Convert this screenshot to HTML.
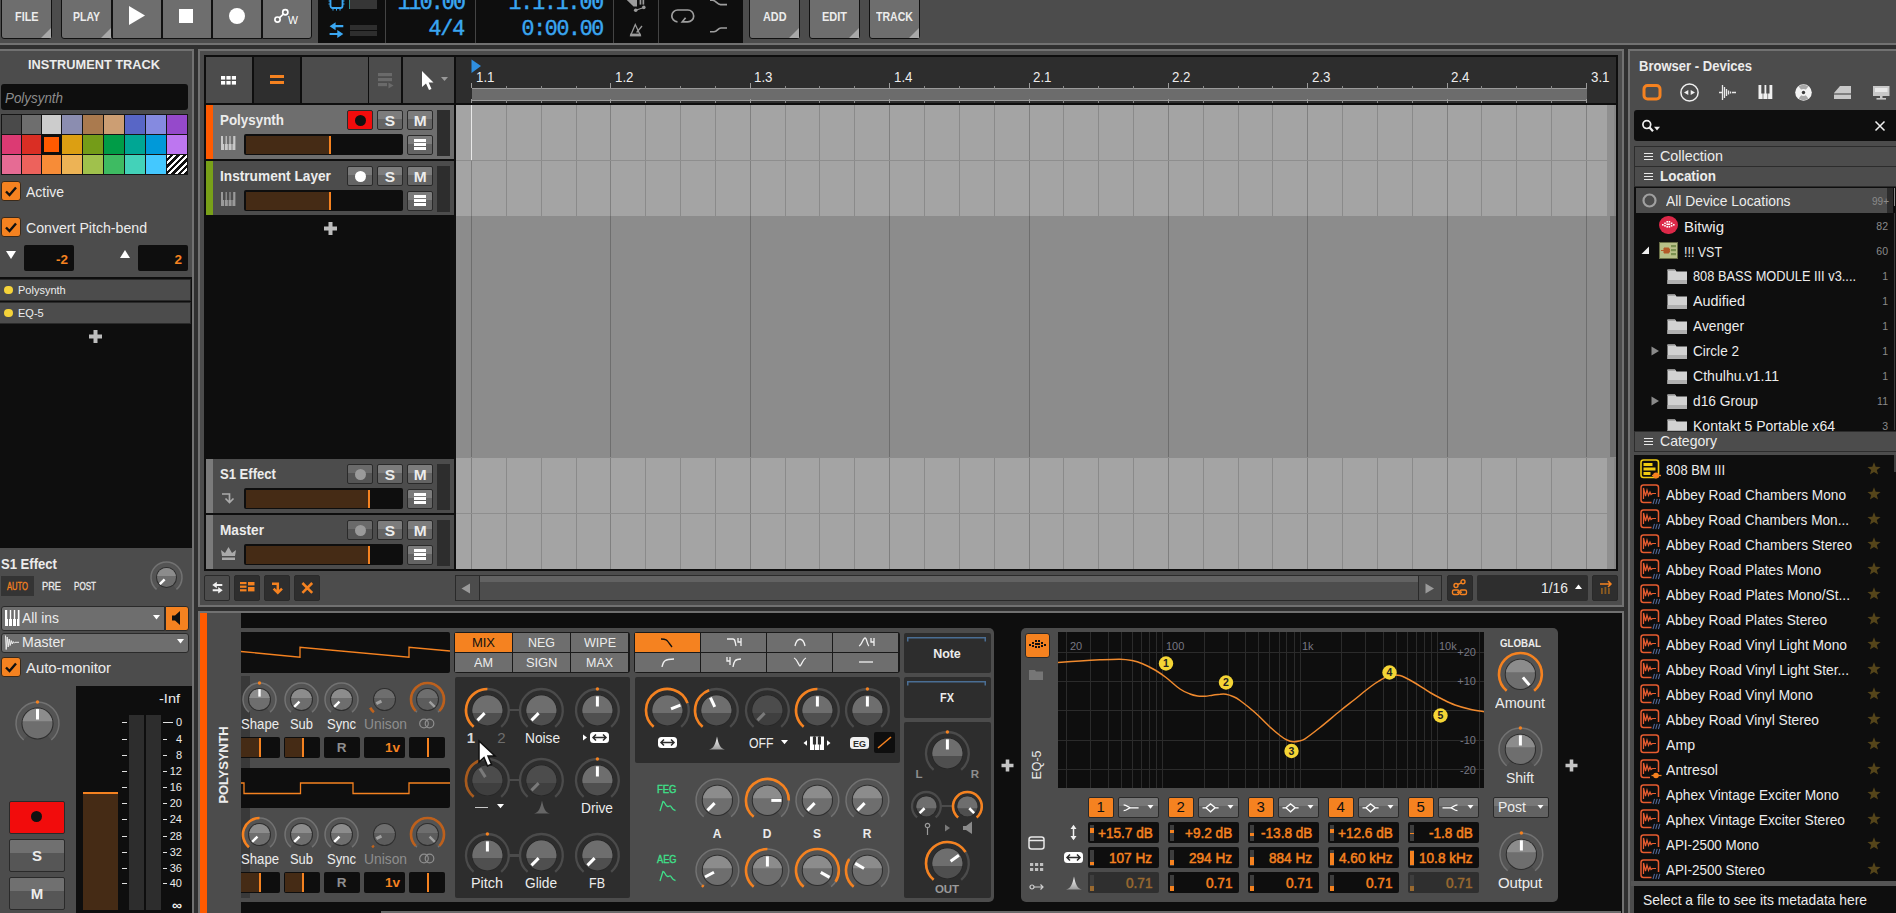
<!DOCTYPE html>
<html><head><meta charset="utf-8"><title>Bitwig Studio</title>
<style>
html,body{margin:0;padding:0;}
body{width:1896px;height:913px;overflow:hidden;background:#2f2f2f;position:relative;font-family:"Liberation Sans",sans-serif;}
#app{position:absolute;left:0;top:0;width:1896px;height:913px;overflow:hidden;}
#app div,#app svg{position:absolute;box-sizing:border-box;}
.t{white-space:nowrap;}
.btn{background:#6e6e6e;border:1px solid #141414;border-radius:3px;}
</style></head><body><div id="app">
<div style="left:0px;top:0px;width:1896px;height:43px;background:#4c4c4c;"></div>
<div style="left:0px;top:43px;width:1896px;height:2px;background:#717171;"></div>
<div style="left:1px;top:-3px;width:51px;height:41.5px;background:#6e6e6e;border:1px solid #111;border-radius:3px;"></div>
<svg style="left:41px;top:28px;" width="10" height="10" viewBox="0 0 10 10"><path d="M10 0V10H0Z" fill="#a8a8a8"/></svg>
<div class="t" style="left:14.75px;top:10.14px;font-size:12px;line-height:14px;color:#ececec;font-weight:bold;transform:scaleX(0.9039);transform-origin:0 50%;">FILE</div>
<div style="left:61px;top:-3px;width:51px;height:41.5px;background:#6e6e6e;border:1px solid #111;border-radius:3px;"></div>
<svg style="left:101px;top:28px;" width="10" height="10" viewBox="0 0 10 10"><path d="M10 0V10H0Z" fill="#a8a8a8"/></svg>
<div class="t" style="left:73.00px;top:10.14px;font-size:12px;line-height:14px;color:#ececec;font-weight:bold;transform:scaleX(0.8737);transform-origin:0 50%;">PLAY</div>
<div style="left:111.5px;top:-3px;width:50.5px;height:41.5px;background:#6e6e6e;border:1px solid #111;"></div>
<div style="left:161.5px;top:-3px;width:50.5px;height:41.5px;background:#6e6e6e;border:1px solid #111;"></div>
<div style="left:211.5px;top:-3px;width:50.5px;height:41.5px;background:#6e6e6e;border:1px solid #111;"></div>
<div style="left:261.5px;top:-3px;width:50.5px;height:41.5px;background:#6e6e6e;border:1px solid #111;border-radius:0 0 3px 0;"></div>
<svg style="left:126px;top:5px;" width="22" height="22" viewBox="0 0 22 22"><path d="M3 1L19 10.5L3 20Z" fill="#fff"/></svg>
<div style="left:179px;top:9px;width:14px;height:14px;background:#fff;"></div>
<div style="left:228.5px;top:8px;width:16px;height:16px;background:#fff;border-radius:50%;"></div>
<svg style="left:271px;top:4px;" width="32" height="26" viewBox="0 0 32 26"><g fill="none" stroke="#fff" stroke-width="1.7"><circle cx="6.5" cy="15.6" r="2.6"/><circle cx="14.3" cy="8.2" r="2.6"/><path d="M8.4 13.8L12.4 10"/></g></svg>
<div class="t" style="left:288.00px;top:13.62px;font-size:10.5px;line-height:13px;color:#fff;">W</div>
<div style="left:318px;top:0px;width:425px;height:42.5px;background:#0e0e0e;"></div>
<div style="left:385px;top:0px;width:1px;height:42.5px;background:#444;"></div>
<div style="left:475px;top:0px;width:1px;height:42.5px;background:#444;"></div>
<div style="left:613px;top:0px;width:1px;height:42.5px;background:#444;"></div>
<div style="left:658px;top:0px;width:1px;height:42.5px;background:#444;"></div>
<svg style="left:327px;top:0px;" width="22" height="12" viewBox="0 0 22 12"><rect x="3.5" y="-4" width="12" height="12" rx="2" fill="none" stroke="#3aa7f2" stroke-width="1.8"/><path d="M1.5 1h2M1.5 4h2M15.5 1h2M15.5 4h2M6 9v1.6M9.5 9v1.6M13 9v1.6" stroke="#3aa7f2" stroke-width="1"/></svg>
<div style="left:350px;top:0px;width:26.5px;height:9px;background:#363636;"></div>
<div style="left:349px;top:0px;width:1px;height:9px;background:#2e8f8f;"></div>
<svg style="left:329px;top:21px;" width="16" height="18" viewBox="0 0 16 18"><g fill="#3aa7f2"><path d="M0.6 5.2L6.6 1.2V4.1H14.3V6.3H6.6V9.2Z"/><path d="M14.3 13L8.3 9V11.9H0.6V14.1H8.3V17Z"/></g></svg>
<div style="left:350px;top:25px;width:26.5px;height:4.5px;background:#2e2e2e;"></div>
<div style="left:350px;top:31px;width:26.5px;height:4.5px;background:#2e2e2e;"></div>
<div class="t" style="left:397.50px;top:-10.25px;font-size:21.5px;line-height:26px;color:#3aa7f2;font-family:'Liberation Mono',monospace;letter-spacing:-1.818px;-webkit-text-stroke:0.45px #3aa7f2;">110.00</div>
<div class="t" style="left:428.50px;top:15.95px;font-size:21.5px;line-height:26px;color:#3aa7f2;font-family:'Liberation Mono',monospace;letter-spacing:-1.068px;-webkit-text-stroke:0.45px #3aa7f2;">4/4</div>
<div class="t" style="left:508.50px;top:-10.25px;font-size:21.5px;line-height:26px;color:#3aa7f2;font-family:'Liberation Mono',monospace;letter-spacing:-1.089px;-webkit-text-stroke:0.45px #3aa7f2;">1.1.1.00</div>
<div class="t" style="left:521.50px;top:15.95px;font-size:21.5px;line-height:26px;color:#3aa7f2;font-family:'Liberation Mono',monospace;letter-spacing:-1.259px;-webkit-text-stroke:0.45px #3aa7f2;">0:00.00</div>
<svg style="left:620px;top:0px;" width="32" height="16" viewBox="0 0 32 16"><g fill="#9a9a9a"><path d="M6.8 0L13.5 6.5H17V0Z"/><rect x="19.6" y="0" width="1.7" height="4.6"/><rect x="22.5" y="0" width="1.7" height="4.6"/><circle cx="15.7" cy="10.3" r="1.8"/><circle cx="23.8" cy="7.4" r="1.8"/></g><path d="M15.7 10.3L23.8 7.4" stroke="#9a9a9a" stroke-width="1.1"/></svg>
<svg style="left:628px;top:22px;" width="18" height="16" viewBox="0 0 18 16"><path d="M7.3 2.6L2.6 13.6H12.4Z" fill="none" stroke="#9a9a9a" stroke-width="1.3"/><rect x="2.2" y="11.6" width="10.6" height="2.6" fill="#9a9a9a"/><path d="M8.6 10.5L14 4" stroke="#9a9a9a" stroke-width="1.3"/></svg>
<svg style="left:668px;top:6px;" width="30" height="20" viewBox="0 0 30 20"><path d="M9.5 15.8A5.9 5.9 0 0 1 9.9 4H19.8A5.9 5.9 0 0 1 19.8 15.8H14.3L17.6 11.8" fill="none" stroke="#9e9e9e" stroke-width="1.7"/></svg>
<svg style="left:708px;top:0px;" width="24" height="8" viewBox="0 0 24 8"><path d="M2 0.3H4.5C8 0.3 9 4.6 12.5 4.6H19" fill="none" stroke="#9e9e9e" stroke-width="1.6"/></svg>
<svg style="left:708px;top:22px;" width="24" height="14" viewBox="0 0 24 14"><path d="M2 9.8H6C9.5 9.8 9.5 6 13 6H19" fill="none" stroke="#9e9e9e" stroke-width="1.6"/></svg>
<div style="left:749px;top:-3px;width:51px;height:41.5px;background:#6e6e6e;border:1px solid #111;border-radius:3px;"></div>
<svg style="left:789px;top:28px;" width="10" height="10" viewBox="0 0 10 10"><path d="M10 0V10H0Z" fill="#a8a8a8"/></svg>
<div class="t" style="left:762.75px;top:10.14px;font-size:12px;line-height:14px;color:#ececec;font-weight:bold;transform:scaleX(0.9039);transform-origin:0 50%;">ADD</div>
<div style="left:809px;top:-3px;width:51px;height:41.5px;background:#6e6e6e;border:1px solid #111;border-radius:3px;"></div>
<svg style="left:849px;top:28px;" width="10" height="10" viewBox="0 0 10 10"><path d="M10 0V10H0Z" fill="#a8a8a8"/></svg>
<div class="t" style="left:822.00px;top:10.14px;font-size:12px;line-height:14px;color:#ececec;font-weight:bold;transform:scaleX(0.9146);transform-origin:0 50%;">EDIT</div>
<div style="left:869px;top:-3px;width:51px;height:41.5px;background:#6e6e6e;border:1px solid #111;border-radius:3px;"></div>
<svg style="left:909px;top:28px;" width="10" height="10" viewBox="0 0 10 10"><path d="M10 0V10H0Z" fill="#a8a8a8"/></svg>
<div class="t" style="left:876.00px;top:10.14px;font-size:12px;line-height:14px;color:#ececec;font-weight:bold;transform:scaleX(0.8811);transform-origin:0 50%;">TRACK</div>
<div style="left:-2px;top:49px;width:196px;height:870px;background:#4c4c4c;border:2px solid #717171;"></div>
<div style="left:198px;top:49px;width:1426px;height:558px;background:#4c4c4c;border:2px solid #717171;"></div>
<div style="left:198px;top:611px;width:1426px;height:310px;background:#0e0e0e;border:2px solid #717171;"></div>
<div style="left:1628px;top:49px;width:271px;height:870px;background:#4c4c4c;border:2px solid #717171;"></div>
<div class="t" style="left:28.00px;top:57.16px;font-size:13.5px;line-height:16px;color:#ececec;font-weight:bold;transform:scaleX(0.9463);transform-origin:0 50%;">INSTRUMENT TRACK</div>
<div style="left:1px;top:84px;width:187px;height:26px;background:#0e0e0e;border-radius:3px;"></div>
<div class="t" style="left:5.00px;top:88.67px;font-size:15px;line-height:18px;color:#8c8c8c;font-style:italic;transform:scaleX(0.8919);transform-origin:0 50%;">Polysynth</div>
<div style="left:1px;top:114px;width:187px;height:61px;background:#151515;"></div>
<div style="left:2px;top:115px;width:19px;height:19px;background:#4a4a4a;"></div>
<div style="left:22px;top:115px;width:19px;height:19px;background:#6e6e6e;"></div>
<div style="left:42px;top:115px;width:19px;height:19px;background:#cccccc;"></div>
<div style="left:62px;top:115px;width:20px;height:19px;background:#8b8db0;"></div>
<div style="left:83px;top:115px;width:20px;height:19px;background:#aa7a4e;"></div>
<div style="left:104px;top:115px;width:20px;height:19px;background:#cc9e73;"></div>
<div style="left:125px;top:115px;width:20px;height:19px;background:#5866c6;"></div>
<div style="left:146px;top:115px;width:20px;height:19px;background:#858ae0;"></div>
<div style="left:167px;top:115px;width:20px;height:19px;background:#9549cb;"></div>
<div style="left:2px;top:135px;width:19px;height:19px;background:#dc3a73;"></div>
<div style="left:22px;top:135px;width:19px;height:19px;background:#da2e24;"></div>
<div style="left:41px;top:134px;width:21px;height:21px;background:#0e0e0e;"></div>
<div style="left:44px;top:137px;width:15px;height:15px;background:#ff5a00;"></div>
<div style="left:62px;top:135px;width:20px;height:19px;background:#dc9f12;"></div>
<div style="left:83px;top:135px;width:20px;height:19px;background:#749c18;"></div>
<div style="left:104px;top:135px;width:20px;height:19px;background:#009c47;"></div>
<div style="left:125px;top:135px;width:20px;height:19px;background:#00a694;"></div>
<div style="left:146px;top:135px;width:20px;height:19px;background:#0099d9;"></div>
<div style="left:167px;top:135px;width:20px;height:19px;background:#bd76f0;"></div>
<div style="left:2px;top:155px;width:19px;height:19px;background:#e66b94;"></div>
<div style="left:22px;top:155px;width:19px;height:19px;background:#ed625c;"></div>
<div style="left:42px;top:155px;width:19px;height:19px;background:#f78c37;"></div>
<div style="left:62px;top:155px;width:20px;height:19px;background:#edb355;"></div>
<div style="left:83px;top:155px;width:20px;height:19px;background:#a0c14c;"></div>
<div style="left:104px;top:155px;width:20px;height:19px;background:#3ebb62;"></div>
<div style="left:125px;top:155px;width:20px;height:19px;background:#43d2b9;"></div>
<div style="left:146px;top:155px;width:20px;height:19px;background:#44c8ff;"></div>
<div style="left:167px;top:155px;width:20px;height:19px;background:repeating-linear-gradient(135deg,#fff 0 2.2px,#111 2.2px 4.6px);"></div>
<div style="left:1px;top:181px;width:20px;height:20px;background:#f58220;border:1px solid #3a2a1a;border-radius:3px;"></div>
<svg style="left:1px;top:181px;" width="20" height="20" viewBox="0 0 20 20"><path d="M5 10.5L8.5 14L15 6.5" fill="none" stroke="#111" stroke-width="2.4"/></svg>
<div class="t" style="left:26.00px;top:183.17px;font-size:15px;line-height:18px;color:#ececec;transform:scaleX(0.9303);transform-origin:0 50%;">Active</div>
<div style="left:1px;top:217px;width:20px;height:20px;background:#f58220;border:1px solid #3a2a1a;border-radius:3px;"></div>
<svg style="left:1px;top:217px;" width="20" height="20" viewBox="0 0 20 20"><path d="M5 10.5L8.5 14L15 6.5" fill="none" stroke="#111" stroke-width="2.4"/></svg>
<div class="t" style="left:26.00px;top:219.17px;font-size:15px;line-height:18px;color:#ececec;transform:scaleX(0.9423);transform-origin:0 50%;">Convert Pitch-bend</div>
<svg style="left:5px;top:250px;" width="12" height="10" viewBox="0 0 12 10"><path d="M1 1H11L6 9Z" fill="#fff"/></svg>
<svg style="left:119px;top:249px;" width="12" height="10" viewBox="0 0 12 10"><path d="M1 9H11L6 1Z" fill="#fff"/></svg>
<div style="left:24px;top:245px;width:50px;height:26px;background:#0e0e0e;border-radius:2px;"></div>
<div style="left:138px;top:245px;width:50px;height:26px;background:#0e0e0e;border-radius:2px;"></div>
<div class="t" style="left:56.00px;top:251.66px;font-size:13.5px;line-height:16px;color:#f58220;font-weight:bold;">-2</div>
<div class="t" style="left:174.49px;top:251.66px;font-size:13.5px;line-height:16px;color:#f58220;font-weight:bold;">2</div>
<div style="left:0px;top:277px;width:192px;height:271px;background:#0e0e0e;"></div>
<div style="left:0px;top:279px;width:190.5px;height:21.5px;background:#4c4c4c;border:1px solid #2a2a2a;border-left:none;"></div>
<div style="left:4px;top:285.5px;width:8.5px;height:8.5px;background:#f5d33a;border-radius:50%;"></div>
<div class="t" style="left:18.00px;top:283.63px;font-size:11px;line-height:13px;color:#ececec;">Polysynth</div>
<div style="left:0px;top:302px;width:190.5px;height:21.5px;background:#4c4c4c;border:1px solid #2a2a2a;border-left:none;"></div>
<div style="left:4px;top:308.5px;width:8.5px;height:8.5px;background:#f5d33a;border-radius:50%;"></div>
<div class="t" style="left:18.00px;top:306.63px;font-size:11px;line-height:13px;color:#ececec;">EQ-5</div>
<svg style="left:89px;top:330px;" width="13" height="13" viewBox="0 0 13 13"><path d="M4.5 0H8.5V4.5H13V8.5H8.5V13H4.5V8.5H0V4.5H4.5Z" fill="#bdbdbd"/></svg>
<div class="t" style="left:1.00px;top:555.66px;font-size:14.2px;line-height:17px;color:#ececec;font-weight:bold;transform:scaleX(0.9215);transform-origin:0 50%;">S1 Effect</div>
<svg style="left:147.5px;top:558.5px;" width="37" height="37" viewBox="0 0 37 37"><path d="M10.14 28.46 A13 13 0 1 1 26.86 28.46" fill="none" stroke="#545454" stroke-width="5"/><path d="M8.54 30.37 A15.5 15.5 0 1 1 28.46 30.37" fill="none" stroke="#727272" stroke-width="1.5"/><circle cx="18.5" cy="18.5" r="10.5" fill="#2e2e2e"/><circle cx="18.5" cy="18.5" r="9.5" fill="#6e6e6e"/><path d="M9.10 17.10 A9.5 9.5 0 0 1 27.90 17.10 Z" fill="#8c8c8c"/><line x1="16.64" y1="20.36" x2="11.82" y2="25.18" stroke="#ffffff" stroke-width="2.4"/></svg>
<div style="left:1px;top:575.5px;width:33px;height:20.5px;background:#343434;"></div>
<div class="t" style="left:7.00px;top:579.62px;font-size:10.5px;line-height:13px;color:#f58220;transform:scaleX(0.7247);transform-origin:0 50%;-webkit-text-stroke:0.3px #f58220;">AUTO</div>
<div class="t" style="left:42.00px;top:579.62px;font-size:10.5px;line-height:13px;color:#ececec;transform:scaleX(0.8800);transform-origin:0 50%;-webkit-text-stroke:0.3px #ececec;">PRE</div>
<div class="t" style="left:74.00px;top:579.62px;font-size:10.5px;line-height:13px;color:#ececec;transform:scaleX(0.7695);transform-origin:0 50%;-webkit-text-stroke:0.3px #ececec;">POST</div>
<div style="left:1px;top:606px;width:163.5px;height:24.5px;background:#6e6e6e;border:1px solid #2a2a2a;border-radius:3px 0 0 3px;"></div>
<svg style="left:5px;top:610px;" width="15" height="16" viewBox="0 0 15 16"><g fill="#fff"><rect x="0" y="0" width="3" height="16"/><rect x="4" y="0" width="3" height="16"/><rect x="8" y="0" width="3" height="16"/><rect x="12" y="0" width="2.5" height="16"/></g><g fill="#6e6e6e"><rect x="2.2" y="0" width="2.6" height="9"/><rect x="6.2" y="0" width="2.6" height="9"/><rect x="10.2" y="0" width="2.6" height="9"/></g></svg>
<div class="t" style="left:22.00px;top:609.17px;font-size:15px;line-height:18px;color:#ececec;transform:scaleX(0.9247);transform-origin:0 50%;">All ins</div>
<svg style="left:153px;top:615px;" width="8" height="6" viewBox="0 0 8 6"><path d="M0 0H7L3.5 4.5Z" fill="#fff"/></svg>
<div style="left:164.5px;top:606px;width:24px;height:24.5px;background:#f58220;border:1px solid #2a2a2a;border-radius:0 3px 3px 0;"></div>
<svg style="left:169px;top:610px;" width="16" height="16" viewBox="0 0 16 16"><path d="M3 5.5H6L11 1V15L6 10.5H3Z" fill="#111"/></svg>
<div style="left:1px;top:632.5px;width:187.5px;height:20px;background:#6e6e6e;border:1px solid #2a2a2a;border-radius:3px;"></div>
<svg style="left:4px;top:635px;" width="16" height="15" viewBox="0 0 16 15"><path d="M1.5 0.5L2.2 14.5L3.2 2L4.2 12L5.2 4L6.2 10.5L7.2 5.5L8.2 9L9.2 6.5L10.2 8.2L11 7.3H15" stroke="#ececec" stroke-width="1" fill="none"/></svg>
<div class="t" style="left:22.00px;top:633.17px;font-size:15px;line-height:18px;color:#ececec;transform:scaleX(0.9380);transform-origin:0 50%;">Master</div>
<svg style="left:177px;top:639px;" width="8" height="6" viewBox="0 0 8 6"><path d="M0 0H7L3.5 4.5Z" fill="#fff"/></svg>
<div style="left:1px;top:657px;width:20px;height:20px;background:#f58220;border:1px solid #3a2a1a;border-radius:3px;"></div>
<svg style="left:1px;top:657px;" width="20" height="20" viewBox="0 0 20 20"><path d="M5 10.5L8.5 14L15 6.5" fill="none" stroke="#111" stroke-width="2.4"/></svg>
<div class="t" style="left:26.00px;top:658.67px;font-size:15px;line-height:18px;color:#ececec;letter-spacing:-0.073px;">Auto-monitor</div>
<svg style="left:12.5px;top:699px;" width="49" height="49" viewBox="0 0 49 49"><path d="M12.45 38.86 A18.75 18.75 0 1 1 36.55 38.86" fill="none" stroke="#545454" stroke-width="5.5"/><path d="M10.68 40.97 A21.5 21.5 0 1 1 38.32 40.97" fill="none" stroke="#727272" stroke-width="1.5"/><circle cx="24.5" cy="3" r="1.7" fill="#f58220"/><circle cx="24.5" cy="24.5" r="16" fill="#2e2e2e"/><circle cx="24.5" cy="24.5" r="15" fill="#6e6e6e"/><path d="M9.65 22.37 A15 15 0 0 1 39.35 22.37 Z" fill="#8c8c8c"/><line x1="24.50" y1="20.50" x2="24.50" y2="10.10" stroke="#ffffff" stroke-width="3"/></svg>
<div style="left:76px;top:686px;width:116px;height:227px;background:#0e0e0e;"></div>
<div class="t" style="left:159.00px;top:690.66px;font-size:13.5px;line-height:16px;color:#ececec;transform:scaleX(1.0766);transform-origin:0 50%;">-Inf</div>
<div style="left:83px;top:792.5px;width:35px;height:117.5px;background:#452b15;"></div>
<div style="left:83px;top:792px;width:35px;height:1.6px;background:#f58220;"></div>
<div style="left:129px;top:715px;width:15px;height:195px;background:#2d2d2d;"></div>
<div style="left:146px;top:715px;width:15px;height:195px;background:#2d2d2d;"></div>
<div style="left:122px;top:721.7px;width:5px;height:1.4px;background:#e0e0e0;"></div>
<div style="left:163px;top:721.7px;width:10px;height:1.4px;background:#e0e0e0;"></div>
<div class="t" style="left:175.88px;top:716.03px;font-size:11px;line-height:13px;color:#ececec;">0</div>
<div style="left:122px;top:738.8px;width:5px;height:1.4px;background:#e0e0e0;"></div>
<div style="left:163px;top:738.8px;width:4px;height:1.4px;background:#e0e0e0;"></div>
<div class="t" style="left:175.88px;top:733.13px;font-size:11px;line-height:13px;color:#ececec;">4</div>
<div style="left:122px;top:754.7px;width:5px;height:1.4px;background:#e0e0e0;"></div>
<div style="left:163px;top:754.7px;width:4px;height:1.4px;background:#e0e0e0;"></div>
<div class="t" style="left:175.88px;top:749.03px;font-size:11px;line-height:13px;color:#ececec;">8</div>
<div style="left:122px;top:770.7px;width:5px;height:1.4px;background:#e0e0e0;"></div>
<div style="left:163px;top:770.7px;width:4px;height:1.4px;background:#e0e0e0;"></div>
<div class="t" style="left:169.76px;top:765.03px;font-size:11px;line-height:13px;color:#ececec;">12</div>
<div style="left:122px;top:786.9px;width:5px;height:1.4px;background:#e0e0e0;"></div>
<div style="left:163px;top:786.9px;width:4px;height:1.4px;background:#e0e0e0;"></div>
<div class="t" style="left:169.76px;top:781.23px;font-size:11px;line-height:13px;color:#ececec;">16</div>
<div style="left:122px;top:802.6px;width:5px;height:1.4px;background:#e0e0e0;"></div>
<div style="left:163px;top:802.6px;width:4px;height:1.4px;background:#e0e0e0;"></div>
<div class="t" style="left:169.76px;top:796.93px;font-size:11px;line-height:13px;color:#ececec;">20</div>
<div style="left:122px;top:818.7px;width:5px;height:1.4px;background:#e0e0e0;"></div>
<div style="left:163px;top:818.7px;width:4px;height:1.4px;background:#e0e0e0;"></div>
<div class="t" style="left:169.76px;top:813.03px;font-size:11px;line-height:13px;color:#ececec;">24</div>
<div style="left:122px;top:835.7px;width:5px;height:1.4px;background:#e0e0e0;"></div>
<div style="left:163px;top:835.7px;width:4px;height:1.4px;background:#e0e0e0;"></div>
<div class="t" style="left:169.76px;top:830.03px;font-size:11px;line-height:13px;color:#ececec;">28</div>
<div style="left:122px;top:851.8px;width:5px;height:1.4px;background:#e0e0e0;"></div>
<div style="left:163px;top:851.8px;width:4px;height:1.4px;background:#e0e0e0;"></div>
<div class="t" style="left:169.76px;top:846.13px;font-size:11px;line-height:13px;color:#ececec;">32</div>
<div style="left:122px;top:867.7px;width:5px;height:1.4px;background:#e0e0e0;"></div>
<div style="left:163px;top:867.7px;width:4px;height:1.4px;background:#e0e0e0;"></div>
<div class="t" style="left:169.76px;top:862.03px;font-size:11px;line-height:13px;color:#ececec;">36</div>
<div style="left:122px;top:882.8px;width:5px;height:1.4px;background:#e0e0e0;"></div>
<div style="left:163px;top:882.8px;width:4px;height:1.4px;background:#e0e0e0;"></div>
<div class="t" style="left:169.76px;top:877.13px;font-size:11px;line-height:13px;color:#ececec;">40</div>
<div class="t" style="left:172.02px;top:896.66px;font-size:14px;line-height:17px;color:#ececec;font-weight:bold;">∞</div>
<div style="left:9px;top:800.5px;width:55.5px;height:33px;background:#f20c0c;border:1px solid #2a2a2a;border-radius:2px;"></div>
<div style="left:31px;top:811px;width:11px;height:11px;background:#111;border-radius:50%;"></div>
<div style="left:9px;top:838.5px;width:55.5px;height:33px;border:1px solid #2a2a2a;border-radius:2px;background:linear-gradient(#707070 0 42%,#565656 42%);"></div>
<div class="t" style="left:32.00px;top:846.67px;font-size:15px;line-height:18px;color:#ececec;font-weight:bold;">S</div>
<div style="left:9px;top:876.5px;width:55.5px;height:33px;border:1px solid #2a2a2a;border-radius:2px;background:linear-gradient(#707070 0 42%,#565656 42%);"></div>
<div class="t" style="left:30.75px;top:884.67px;font-size:15px;line-height:18px;color:#ececec;font-weight:bold;">M</div>
<div style="left:204px;top:55px;width:1414px;height:516px;background:#0e0e0e;"></div>
<div style="left:206px;top:57px;width:46px;height:45.5px;background:#4c4c4c;"></div>
<svg style="left:220.5px;top:75.5px;" width="18" height="12" viewBox="0 0 18 12"><g fill="#fff"><rect x="0" y="0" width="4.2" height="3.6"/><rect x="5.4" y="0" width="4.2" height="3.6"/><rect x="10.8" y="0" width="4.2" height="3.6"/><rect x="0" y="5" width="4.2" height="3.6"/><rect x="5.4" y="5" width="4.2" height="3.6"/><rect x="10.8" y="5" width="4.2" height="3.6"/></g></svg>
<div style="left:254px;top:57px;width:46px;height:45.5px;background:#2e2e2e;"></div>
<div style="left:270px;top:75px;width:14px;height:3.2px;background:#f58220;"></div>
<div style="left:270px;top:80.5px;width:14px;height:3.2px;background:#f58220;"></div>
<div style="left:302px;top:57px;width:65.5px;height:45.5px;background:#4c4c4c;"></div>
<div style="left:369px;top:57px;width:32px;height:45.5px;background:#4c4c4c;"></div>
<svg style="left:378px;top:72px;" width="16" height="18" viewBox="0 0 16 18"><g fill="#6a6a6a"><rect x="0" y="1" width="14" height="3.2"/><rect x="0" y="6" width="14" height="3.2"/><rect x="0" y="11" width="9" height="3.2"/><path d="M10.5 10.5L15.5 13.5L10.5 16.5Z"/></g></svg>
<div style="left:403px;top:57px;width:51px;height:45.5px;background:#4c4c4c;"></div>
<svg style="left:420px;top:70px;" width="16" height="22" viewBox="0 0 16 22"><path d="M2 1V17L6 13.5L9 20L11.5 19L8.7 12.5H13.5Z" fill="#fff"/></svg>
<svg style="left:441px;top:77px;" width="8" height="6" viewBox="0 0 8 6"><path d="M0 0H7L3.5 4Z" fill="#9a9a9a"/></svg>
<div style="left:456px;top:57px;width:1160px;height:46px;background:#2d2d2d;"></div>
<div style="left:472px;top:88px;width:1114.5px;height:13px;background:#6c6c6c;border-top:1px solid #9a9a9a;border-bottom:1px solid #9a9a9a;"></div>
<div class="t" style="left:475.50px;top:69.06px;font-size:14px;line-height:17px;color:#ececec;transform:scaleX(0.9506);transform-origin:0 50%;">1.1</div>
<div style="left:471px;top:83px;width:1px;height:5px;background:#9a9a9a;"></div>
<div style="left:505.844px;top:86px;width:1px;height:2.5px;background:#8a8a8a;"></div>
<div style="left:505.844px;top:100px;width:1px;height:2.5px;background:#8a8a8a;"></div>
<div style="left:540.688px;top:86px;width:1px;height:2.5px;background:#8a8a8a;"></div>
<div style="left:540.688px;top:100px;width:1px;height:2.5px;background:#8a8a8a;"></div>
<div style="left:575.531px;top:86px;width:1px;height:2.5px;background:#8a8a8a;"></div>
<div style="left:575.531px;top:100px;width:1px;height:2.5px;background:#8a8a8a;"></div>
<div style="left:471px;top:99px;width:1px;height:3.5px;background:#9a9a9a;"></div>
<div class="t" style="left:614.88px;top:69.06px;font-size:14px;line-height:17px;color:#ececec;transform:scaleX(0.9506);transform-origin:0 50%;">1.2</div>
<div style="left:610.375px;top:83px;width:1px;height:5px;background:#9a9a9a;"></div>
<div style="left:645.219px;top:86px;width:1px;height:2.5px;background:#8a8a8a;"></div>
<div style="left:645.219px;top:100px;width:1px;height:2.5px;background:#8a8a8a;"></div>
<div style="left:680.062px;top:86px;width:1px;height:2.5px;background:#8a8a8a;"></div>
<div style="left:680.062px;top:100px;width:1px;height:2.5px;background:#8a8a8a;"></div>
<div style="left:714.906px;top:86px;width:1px;height:2.5px;background:#8a8a8a;"></div>
<div style="left:714.906px;top:100px;width:1px;height:2.5px;background:#8a8a8a;"></div>
<div style="left:610.375px;top:99px;width:1px;height:3.5px;background:#9a9a9a;"></div>
<div class="t" style="left:754.25px;top:69.06px;font-size:14px;line-height:17px;color:#ececec;transform:scaleX(0.9506);transform-origin:0 50%;">1.3</div>
<div style="left:749.75px;top:83px;width:1px;height:5px;background:#9a9a9a;"></div>
<div style="left:784.594px;top:86px;width:1px;height:2.5px;background:#8a8a8a;"></div>
<div style="left:784.594px;top:100px;width:1px;height:2.5px;background:#8a8a8a;"></div>
<div style="left:819.438px;top:86px;width:1px;height:2.5px;background:#8a8a8a;"></div>
<div style="left:819.438px;top:100px;width:1px;height:2.5px;background:#8a8a8a;"></div>
<div style="left:854.281px;top:86px;width:1px;height:2.5px;background:#8a8a8a;"></div>
<div style="left:854.281px;top:100px;width:1px;height:2.5px;background:#8a8a8a;"></div>
<div style="left:749.75px;top:99px;width:1px;height:3.5px;background:#9a9a9a;"></div>
<div class="t" style="left:893.62px;top:69.06px;font-size:14px;line-height:17px;color:#ececec;transform:scaleX(0.9506);transform-origin:0 50%;">1.4</div>
<div style="left:889.125px;top:83px;width:1px;height:5px;background:#9a9a9a;"></div>
<div style="left:923.969px;top:86px;width:1px;height:2.5px;background:#8a8a8a;"></div>
<div style="left:923.969px;top:100px;width:1px;height:2.5px;background:#8a8a8a;"></div>
<div style="left:958.812px;top:86px;width:1px;height:2.5px;background:#8a8a8a;"></div>
<div style="left:958.812px;top:100px;width:1px;height:2.5px;background:#8a8a8a;"></div>
<div style="left:993.656px;top:86px;width:1px;height:2.5px;background:#8a8a8a;"></div>
<div style="left:993.656px;top:100px;width:1px;height:2.5px;background:#8a8a8a;"></div>
<div style="left:889.125px;top:99px;width:1px;height:3.5px;background:#9a9a9a;"></div>
<div class="t" style="left:1033.00px;top:69.06px;font-size:14px;line-height:17px;color:#ececec;transform:scaleX(0.9506);transform-origin:0 50%;">2.1</div>
<div style="left:1028.5px;top:83px;width:1px;height:5px;background:#9a9a9a;"></div>
<div style="left:1063.34px;top:86px;width:1px;height:2.5px;background:#8a8a8a;"></div>
<div style="left:1063.34px;top:100px;width:1px;height:2.5px;background:#8a8a8a;"></div>
<div style="left:1098.19px;top:86px;width:1px;height:2.5px;background:#8a8a8a;"></div>
<div style="left:1098.19px;top:100px;width:1px;height:2.5px;background:#8a8a8a;"></div>
<div style="left:1133.03px;top:86px;width:1px;height:2.5px;background:#8a8a8a;"></div>
<div style="left:1133.03px;top:100px;width:1px;height:2.5px;background:#8a8a8a;"></div>
<div style="left:1028.5px;top:99px;width:1px;height:3.5px;background:#9a9a9a;"></div>
<div class="t" style="left:1172.38px;top:69.06px;font-size:14px;line-height:17px;color:#ececec;transform:scaleX(0.9506);transform-origin:0 50%;">2.2</div>
<div style="left:1167.88px;top:83px;width:1px;height:5px;background:#9a9a9a;"></div>
<div style="left:1202.72px;top:86px;width:1px;height:2.5px;background:#8a8a8a;"></div>
<div style="left:1202.72px;top:100px;width:1px;height:2.5px;background:#8a8a8a;"></div>
<div style="left:1237.56px;top:86px;width:1px;height:2.5px;background:#8a8a8a;"></div>
<div style="left:1237.56px;top:100px;width:1px;height:2.5px;background:#8a8a8a;"></div>
<div style="left:1272.41px;top:86px;width:1px;height:2.5px;background:#8a8a8a;"></div>
<div style="left:1272.41px;top:100px;width:1px;height:2.5px;background:#8a8a8a;"></div>
<div style="left:1167.88px;top:99px;width:1px;height:3.5px;background:#9a9a9a;"></div>
<div class="t" style="left:1311.75px;top:69.06px;font-size:14px;line-height:17px;color:#ececec;transform:scaleX(0.9506);transform-origin:0 50%;">2.3</div>
<div style="left:1307.25px;top:83px;width:1px;height:5px;background:#9a9a9a;"></div>
<div style="left:1342.09px;top:86px;width:1px;height:2.5px;background:#8a8a8a;"></div>
<div style="left:1342.09px;top:100px;width:1px;height:2.5px;background:#8a8a8a;"></div>
<div style="left:1376.94px;top:86px;width:1px;height:2.5px;background:#8a8a8a;"></div>
<div style="left:1376.94px;top:100px;width:1px;height:2.5px;background:#8a8a8a;"></div>
<div style="left:1411.78px;top:86px;width:1px;height:2.5px;background:#8a8a8a;"></div>
<div style="left:1411.78px;top:100px;width:1px;height:2.5px;background:#8a8a8a;"></div>
<div style="left:1307.25px;top:99px;width:1px;height:3.5px;background:#9a9a9a;"></div>
<div class="t" style="left:1451.12px;top:69.06px;font-size:14px;line-height:17px;color:#ececec;transform:scaleX(0.9506);transform-origin:0 50%;">2.4</div>
<div style="left:1446.62px;top:83px;width:1px;height:5px;background:#9a9a9a;"></div>
<div style="left:1481.47px;top:86px;width:1px;height:2.5px;background:#8a8a8a;"></div>
<div style="left:1481.47px;top:100px;width:1px;height:2.5px;background:#8a8a8a;"></div>
<div style="left:1516.31px;top:86px;width:1px;height:2.5px;background:#8a8a8a;"></div>
<div style="left:1516.31px;top:100px;width:1px;height:2.5px;background:#8a8a8a;"></div>
<div style="left:1551.16px;top:86px;width:1px;height:2.5px;background:#8a8a8a;"></div>
<div style="left:1551.16px;top:100px;width:1px;height:2.5px;background:#8a8a8a;"></div>
<div style="left:1446.62px;top:99px;width:1px;height:3.5px;background:#9a9a9a;"></div>
<div class="t" style="left:1590.50px;top:69.06px;font-size:14px;line-height:17px;color:#ececec;transform:scaleX(0.9506);transform-origin:0 50%;">3.1</div>
<div style="left:1586px;top:83px;width:1px;height:5px;background:#9a9a9a;"></div>
<div style="left:1586px;top:99px;width:1px;height:3.5px;background:#9a9a9a;"></div>
<svg style="left:471px;top:59px;" width="11" height="15" viewBox="0 0 11 15"><path d="M0.5 0.5L10 7L0.5 14Z" fill="#2f8fe0"/></svg>
<div style="left:456px;top:105px;width:1160px;height:464px;background:#8c8c8c;"></div>
<div style="left:456px;top:105px;width:1151px;height:55px;background:#a4a4a4;"></div>
<div style="left:471px;top:105px;width:1px;height:55px;background:#808080;"></div>
<div style="left:505.844px;top:105px;width:1px;height:55px;background:#8a8a8a;"></div>
<div style="left:540.688px;top:105px;width:1px;height:55px;background:#8a8a8a;"></div>
<div style="left:575.531px;top:105px;width:1px;height:55px;background:#8a8a8a;"></div>
<div style="left:610.375px;top:105px;width:1px;height:55px;background:#808080;"></div>
<div style="left:645.219px;top:105px;width:1px;height:55px;background:#8a8a8a;"></div>
<div style="left:680.062px;top:105px;width:1px;height:55px;background:#8a8a8a;"></div>
<div style="left:714.906px;top:105px;width:1px;height:55px;background:#8a8a8a;"></div>
<div style="left:749.75px;top:105px;width:1px;height:55px;background:#808080;"></div>
<div style="left:784.594px;top:105px;width:1px;height:55px;background:#8a8a8a;"></div>
<div style="left:819.438px;top:105px;width:1px;height:55px;background:#8a8a8a;"></div>
<div style="left:854.281px;top:105px;width:1px;height:55px;background:#8a8a8a;"></div>
<div style="left:889.125px;top:105px;width:1px;height:55px;background:#808080;"></div>
<div style="left:923.969px;top:105px;width:1px;height:55px;background:#8a8a8a;"></div>
<div style="left:958.812px;top:105px;width:1px;height:55px;background:#8a8a8a;"></div>
<div style="left:993.656px;top:105px;width:1px;height:55px;background:#8a8a8a;"></div>
<div style="left:1028.5px;top:105px;width:1px;height:55px;background:#808080;"></div>
<div style="left:1063.34px;top:105px;width:1px;height:55px;background:#8a8a8a;"></div>
<div style="left:1098.19px;top:105px;width:1px;height:55px;background:#8a8a8a;"></div>
<div style="left:1133.03px;top:105px;width:1px;height:55px;background:#8a8a8a;"></div>
<div style="left:1167.88px;top:105px;width:1px;height:55px;background:#808080;"></div>
<div style="left:1202.72px;top:105px;width:1px;height:55px;background:#8a8a8a;"></div>
<div style="left:1237.56px;top:105px;width:1px;height:55px;background:#8a8a8a;"></div>
<div style="left:1272.41px;top:105px;width:1px;height:55px;background:#8a8a8a;"></div>
<div style="left:1307.25px;top:105px;width:1px;height:55px;background:#808080;"></div>
<div style="left:1342.09px;top:105px;width:1px;height:55px;background:#8a8a8a;"></div>
<div style="left:1376.94px;top:105px;width:1px;height:55px;background:#8a8a8a;"></div>
<div style="left:1411.78px;top:105px;width:1px;height:55px;background:#8a8a8a;"></div>
<div style="left:1446.62px;top:105px;width:1px;height:55px;background:#808080;"></div>
<div style="left:1481.47px;top:105px;width:1px;height:55px;background:#8a8a8a;"></div>
<div style="left:1516.31px;top:105px;width:1px;height:55px;background:#8a8a8a;"></div>
<div style="left:1551.16px;top:105px;width:1px;height:55px;background:#8a8a8a;"></div>
<div style="left:1586px;top:105px;width:1px;height:55px;background:#808080;"></div>
<div style="left:456px;top:160px;width:1160px;height:1.3px;background:#8e8e8e;"></div>
<div style="left:456px;top:161.3px;width:1151px;height:54.5px;background:#a4a4a4;"></div>
<div style="left:471px;top:161.3px;width:1px;height:54.5px;background:#808080;"></div>
<div style="left:505.844px;top:161.3px;width:1px;height:54.5px;background:#8a8a8a;"></div>
<div style="left:540.688px;top:161.3px;width:1px;height:54.5px;background:#8a8a8a;"></div>
<div style="left:575.531px;top:161.3px;width:1px;height:54.5px;background:#8a8a8a;"></div>
<div style="left:610.375px;top:161.3px;width:1px;height:54.5px;background:#808080;"></div>
<div style="left:645.219px;top:161.3px;width:1px;height:54.5px;background:#8a8a8a;"></div>
<div style="left:680.062px;top:161.3px;width:1px;height:54.5px;background:#8a8a8a;"></div>
<div style="left:714.906px;top:161.3px;width:1px;height:54.5px;background:#8a8a8a;"></div>
<div style="left:749.75px;top:161.3px;width:1px;height:54.5px;background:#808080;"></div>
<div style="left:784.594px;top:161.3px;width:1px;height:54.5px;background:#8a8a8a;"></div>
<div style="left:819.438px;top:161.3px;width:1px;height:54.5px;background:#8a8a8a;"></div>
<div style="left:854.281px;top:161.3px;width:1px;height:54.5px;background:#8a8a8a;"></div>
<div style="left:889.125px;top:161.3px;width:1px;height:54.5px;background:#808080;"></div>
<div style="left:923.969px;top:161.3px;width:1px;height:54.5px;background:#8a8a8a;"></div>
<div style="left:958.812px;top:161.3px;width:1px;height:54.5px;background:#8a8a8a;"></div>
<div style="left:993.656px;top:161.3px;width:1px;height:54.5px;background:#8a8a8a;"></div>
<div style="left:1028.5px;top:161.3px;width:1px;height:54.5px;background:#808080;"></div>
<div style="left:1063.34px;top:161.3px;width:1px;height:54.5px;background:#8a8a8a;"></div>
<div style="left:1098.19px;top:161.3px;width:1px;height:54.5px;background:#8a8a8a;"></div>
<div style="left:1133.03px;top:161.3px;width:1px;height:54.5px;background:#8a8a8a;"></div>
<div style="left:1167.88px;top:161.3px;width:1px;height:54.5px;background:#808080;"></div>
<div style="left:1202.72px;top:161.3px;width:1px;height:54.5px;background:#8a8a8a;"></div>
<div style="left:1237.56px;top:161.3px;width:1px;height:54.5px;background:#8a8a8a;"></div>
<div style="left:1272.41px;top:161.3px;width:1px;height:54.5px;background:#8a8a8a;"></div>
<div style="left:1307.25px;top:161.3px;width:1px;height:54.5px;background:#808080;"></div>
<div style="left:1342.09px;top:161.3px;width:1px;height:54.5px;background:#8a8a8a;"></div>
<div style="left:1376.94px;top:161.3px;width:1px;height:54.5px;background:#8a8a8a;"></div>
<div style="left:1411.78px;top:161.3px;width:1px;height:54.5px;background:#8a8a8a;"></div>
<div style="left:1446.62px;top:161.3px;width:1px;height:54.5px;background:#808080;"></div>
<div style="left:1481.47px;top:161.3px;width:1px;height:54.5px;background:#8a8a8a;"></div>
<div style="left:1516.31px;top:161.3px;width:1px;height:54.5px;background:#8a8a8a;"></div>
<div style="left:1551.16px;top:161.3px;width:1px;height:54.5px;background:#8a8a8a;"></div>
<div style="left:1586px;top:161.3px;width:1px;height:54.5px;background:#808080;"></div>
<div style="left:456px;top:457.5px;width:1151px;height:55px;background:#a4a4a4;"></div>
<div style="left:471px;top:457.5px;width:1px;height:55px;background:#808080;"></div>
<div style="left:505.844px;top:457.5px;width:1px;height:55px;background:#8a8a8a;"></div>
<div style="left:540.688px;top:457.5px;width:1px;height:55px;background:#8a8a8a;"></div>
<div style="left:575.531px;top:457.5px;width:1px;height:55px;background:#8a8a8a;"></div>
<div style="left:610.375px;top:457.5px;width:1px;height:55px;background:#808080;"></div>
<div style="left:645.219px;top:457.5px;width:1px;height:55px;background:#8a8a8a;"></div>
<div style="left:680.062px;top:457.5px;width:1px;height:55px;background:#8a8a8a;"></div>
<div style="left:714.906px;top:457.5px;width:1px;height:55px;background:#8a8a8a;"></div>
<div style="left:749.75px;top:457.5px;width:1px;height:55px;background:#808080;"></div>
<div style="left:784.594px;top:457.5px;width:1px;height:55px;background:#8a8a8a;"></div>
<div style="left:819.438px;top:457.5px;width:1px;height:55px;background:#8a8a8a;"></div>
<div style="left:854.281px;top:457.5px;width:1px;height:55px;background:#8a8a8a;"></div>
<div style="left:889.125px;top:457.5px;width:1px;height:55px;background:#808080;"></div>
<div style="left:923.969px;top:457.5px;width:1px;height:55px;background:#8a8a8a;"></div>
<div style="left:958.812px;top:457.5px;width:1px;height:55px;background:#8a8a8a;"></div>
<div style="left:993.656px;top:457.5px;width:1px;height:55px;background:#8a8a8a;"></div>
<div style="left:1028.5px;top:457.5px;width:1px;height:55px;background:#808080;"></div>
<div style="left:1063.34px;top:457.5px;width:1px;height:55px;background:#8a8a8a;"></div>
<div style="left:1098.19px;top:457.5px;width:1px;height:55px;background:#8a8a8a;"></div>
<div style="left:1133.03px;top:457.5px;width:1px;height:55px;background:#8a8a8a;"></div>
<div style="left:1167.88px;top:457.5px;width:1px;height:55px;background:#808080;"></div>
<div style="left:1202.72px;top:457.5px;width:1px;height:55px;background:#8a8a8a;"></div>
<div style="left:1237.56px;top:457.5px;width:1px;height:55px;background:#8a8a8a;"></div>
<div style="left:1272.41px;top:457.5px;width:1px;height:55px;background:#8a8a8a;"></div>
<div style="left:1307.25px;top:457.5px;width:1px;height:55px;background:#808080;"></div>
<div style="left:1342.09px;top:457.5px;width:1px;height:55px;background:#8a8a8a;"></div>
<div style="left:1376.94px;top:457.5px;width:1px;height:55px;background:#8a8a8a;"></div>
<div style="left:1411.78px;top:457.5px;width:1px;height:55px;background:#8a8a8a;"></div>
<div style="left:1446.62px;top:457.5px;width:1px;height:55px;background:#808080;"></div>
<div style="left:1481.47px;top:457.5px;width:1px;height:55px;background:#8a8a8a;"></div>
<div style="left:1516.31px;top:457.5px;width:1px;height:55px;background:#8a8a8a;"></div>
<div style="left:1551.16px;top:457.5px;width:1px;height:55px;background:#8a8a8a;"></div>
<div style="left:1586px;top:457.5px;width:1px;height:55px;background:#808080;"></div>
<div style="left:456px;top:512.5px;width:1160px;height:1.2px;background:#8e8e8e;"></div>
<div style="left:456px;top:513.7px;width:1151px;height:55px;background:#a4a4a4;"></div>
<div style="left:471px;top:513.7px;width:1px;height:55px;background:#808080;"></div>
<div style="left:505.844px;top:513.7px;width:1px;height:55px;background:#8a8a8a;"></div>
<div style="left:540.688px;top:513.7px;width:1px;height:55px;background:#8a8a8a;"></div>
<div style="left:575.531px;top:513.7px;width:1px;height:55px;background:#8a8a8a;"></div>
<div style="left:610.375px;top:513.7px;width:1px;height:55px;background:#808080;"></div>
<div style="left:645.219px;top:513.7px;width:1px;height:55px;background:#8a8a8a;"></div>
<div style="left:680.062px;top:513.7px;width:1px;height:55px;background:#8a8a8a;"></div>
<div style="left:714.906px;top:513.7px;width:1px;height:55px;background:#8a8a8a;"></div>
<div style="left:749.75px;top:513.7px;width:1px;height:55px;background:#808080;"></div>
<div style="left:784.594px;top:513.7px;width:1px;height:55px;background:#8a8a8a;"></div>
<div style="left:819.438px;top:513.7px;width:1px;height:55px;background:#8a8a8a;"></div>
<div style="left:854.281px;top:513.7px;width:1px;height:55px;background:#8a8a8a;"></div>
<div style="left:889.125px;top:513.7px;width:1px;height:55px;background:#808080;"></div>
<div style="left:923.969px;top:513.7px;width:1px;height:55px;background:#8a8a8a;"></div>
<div style="left:958.812px;top:513.7px;width:1px;height:55px;background:#8a8a8a;"></div>
<div style="left:993.656px;top:513.7px;width:1px;height:55px;background:#8a8a8a;"></div>
<div style="left:1028.5px;top:513.7px;width:1px;height:55px;background:#808080;"></div>
<div style="left:1063.34px;top:513.7px;width:1px;height:55px;background:#8a8a8a;"></div>
<div style="left:1098.19px;top:513.7px;width:1px;height:55px;background:#8a8a8a;"></div>
<div style="left:1133.03px;top:513.7px;width:1px;height:55px;background:#8a8a8a;"></div>
<div style="left:1167.88px;top:513.7px;width:1px;height:55px;background:#808080;"></div>
<div style="left:1202.72px;top:513.7px;width:1px;height:55px;background:#8a8a8a;"></div>
<div style="left:1237.56px;top:513.7px;width:1px;height:55px;background:#8a8a8a;"></div>
<div style="left:1272.41px;top:513.7px;width:1px;height:55px;background:#8a8a8a;"></div>
<div style="left:1307.25px;top:513.7px;width:1px;height:55px;background:#808080;"></div>
<div style="left:1342.09px;top:513.7px;width:1px;height:55px;background:#8a8a8a;"></div>
<div style="left:1376.94px;top:513.7px;width:1px;height:55px;background:#8a8a8a;"></div>
<div style="left:1411.78px;top:513.7px;width:1px;height:55px;background:#8a8a8a;"></div>
<div style="left:1446.62px;top:513.7px;width:1px;height:55px;background:#808080;"></div>
<div style="left:1481.47px;top:513.7px;width:1px;height:55px;background:#8a8a8a;"></div>
<div style="left:1516.31px;top:513.7px;width:1px;height:55px;background:#8a8a8a;"></div>
<div style="left:1551.16px;top:513.7px;width:1px;height:55px;background:#8a8a8a;"></div>
<div style="left:1586px;top:513.7px;width:1px;height:55px;background:#808080;"></div>
<div style="left:471px;top:215.8px;width:1px;height:241.7px;background:#6e6e6e;"></div>
<div style="left:610.375px;top:215.8px;width:1px;height:241.7px;background:#6e6e6e;"></div>
<div style="left:749.75px;top:215.8px;width:1px;height:241.7px;background:#6e6e6e;"></div>
<div style="left:889.125px;top:215.8px;width:1px;height:241.7px;background:#6e6e6e;"></div>
<div style="left:1028.5px;top:215.8px;width:1px;height:241.7px;background:#6e6e6e;"></div>
<div style="left:1167.88px;top:215.8px;width:1px;height:241.7px;background:#6e6e6e;"></div>
<div style="left:1307.25px;top:215.8px;width:1px;height:241.7px;background:#6e6e6e;"></div>
<div style="left:1446.62px;top:215.8px;width:1px;height:241.7px;background:#6e6e6e;"></div>
<div style="left:1586px;top:215.8px;width:1px;height:241.7px;background:#6e6e6e;"></div>
<div style="left:471px;top:105px;width:1.2px;height:54.5px;background:#e8e8e8;"></div>
<div style="left:1607px;top:105px;width:9px;height:111px;background:#8f8f8f;"></div>
<div style="left:1607px;top:457.5px;width:9px;height:111.5px;background:#8f8f8f;"></div>
<div style="left:1614.3px;top:105px;width:1.7px;height:111px;background:#858585;"></div>
<div style="left:1614.3px;top:457.5px;width:1.7px;height:111.5px;background:#858585;"></div>
<div style="left:1610px;top:215.8px;width:6px;height:241.7px;background:#6e6e6e;"></div>
<div style="left:206px;top:105px;width:248px;height:54px;background:#6e6e6e;"></div>
<div style="left:206px;top:105px;width:7px;height:54px;background:#ff5a00;"></div>
<div class="t" style="left:220.00px;top:111.86px;font-size:14.2px;line-height:17px;color:#ececec;font-weight:bold;transform:scaleX(0.9431);transform-origin:0 50%;">Polysynth</div>
<div style="left:347px;top:109.6px;width:25.8px;height:20.4px;background:#f20c0c;border:1px solid #2a2a2a;border-radius:2px;"></div>
<div style="left:354.5px;top:114.5px;width:11px;height:11px;background:#111;border-radius:50%;"></div>
<div style="left:377px;top:109.6px;width:25.8px;height:20.4px;border:1px solid #2a2a2a;border-radius:2px;background:linear-gradient(#7c7c7c 0 42%,#646464 42%);"></div>
<div class="t" style="left:384.73px;top:110.88px;font-size:15.5px;line-height:19px;color:#ececec;font-weight:bold;">S</div>
<div style="left:407.3px;top:109.6px;width:25.8px;height:20.4px;border:1px solid #2a2a2a;border-radius:2px;background:linear-gradient(#7c7c7c 0 42%,#646464 42%);"></div>
<div class="t" style="left:413.74px;top:110.88px;font-size:15.5px;line-height:19px;color:#ececec;font-weight:bold;">M</div>
<div style="left:244.2px;top:134.2px;width:159px;height:20.8px;background:#0e0e0e;border-radius:2px;"></div>
<div style="left:246px;top:135.5px;width:84px;height:18px;background:#452b15;"></div>
<div style="left:329px;top:135.5px;width:2px;height:18px;background:#f58220;"></div>
<div style="left:407.3px;top:134.6px;width:25.8px;height:20.2px;border:1px solid #2a2a2a;border-radius:2px;background:linear-gradient(#7c7c7c 0 42%,#646464 42%);"></div>
<div style="left:414.3px;top:139px;width:12px;height:2.6px;background:#fff;"></div>
<div style="left:414.3px;top:143px;width:12px;height:2.6px;background:#fff;"></div>
<div style="left:414.3px;top:147px;width:12px;height:2.6px;background:#fff;"></div>
<div style="left:437px;top:109.5px;width:13px;height:46px;background:#2d2d2d;"></div>
<svg style="left:221px;top:136px;" width="15" height="15" viewBox="0 0 15 15"><g fill="#c8c8c8"><rect x="0" y="0" width="3" height="14"/><rect x="3.8" y="0" width="3" height="14"/><rect x="7.6" y="0" width="3" height="14"/><rect x="11.4" y="0" width="3" height="14"/></g><g fill="#6e6e6e"><rect x="2" y="0" width="2.6" height="8"/><rect x="5.8" y="0" width="2.6" height="8"/><rect x="9.6" y="0" width="2.6" height="8"/></g></svg>
<div style="left:206px;top:161px;width:248px;height:54px;background:#4c4c4c;"></div>
<div style="left:206px;top:161px;width:7px;height:54px;background:#78a018;"></div>
<div class="t" style="left:220.00px;top:167.86px;font-size:14.2px;line-height:17px;color:#ececec;font-weight:bold;transform:scaleX(0.9635);transform-origin:0 50%;">Instrument Layer</div>
<div style="left:347px;top:165.6px;width:25.8px;height:20.4px;border:1px solid #2a2a2a;border-radius:2px;background:linear-gradient(#7a7a7a 0 42%,#646464 42%);"></div>
<div style="left:354.5px;top:170.5px;width:11px;height:11px;background:#fff;border-radius:50%;"></div>
<div style="left:377px;top:165.6px;width:25.8px;height:20.4px;border:1px solid #2a2a2a;border-radius:2px;background:linear-gradient(#7c7c7c 0 42%,#646464 42%);"></div>
<div class="t" style="left:384.73px;top:166.88px;font-size:15.5px;line-height:19px;color:#ececec;font-weight:bold;">S</div>
<div style="left:407.3px;top:165.6px;width:25.8px;height:20.4px;border:1px solid #2a2a2a;border-radius:2px;background:linear-gradient(#7c7c7c 0 42%,#646464 42%);"></div>
<div class="t" style="left:413.74px;top:166.88px;font-size:15.5px;line-height:19px;color:#ececec;font-weight:bold;">M</div>
<div style="left:244.2px;top:190.2px;width:159px;height:20.8px;background:#0e0e0e;border-radius:2px;"></div>
<div style="left:246px;top:191.5px;width:84px;height:18px;background:#452b15;"></div>
<div style="left:329px;top:191.5px;width:2px;height:18px;background:#f58220;"></div>
<div style="left:407.3px;top:190.6px;width:25.8px;height:20.2px;border:1px solid #2a2a2a;border-radius:2px;background:linear-gradient(#7c7c7c 0 42%,#646464 42%);"></div>
<div style="left:414.3px;top:195px;width:12px;height:2.6px;background:#fff;"></div>
<div style="left:414.3px;top:199px;width:12px;height:2.6px;background:#fff;"></div>
<div style="left:414.3px;top:203px;width:12px;height:2.6px;background:#fff;"></div>
<div style="left:437px;top:165.5px;width:13px;height:46px;background:#2d2d2d;"></div>
<svg style="left:221px;top:192px;" width="15" height="15" viewBox="0 0 15 15"><g fill="#9a9a9a"><rect x="0" y="0" width="3" height="14"/><rect x="3.8" y="0" width="3" height="14"/><rect x="7.6" y="0" width="3" height="14"/><rect x="11.4" y="0" width="3" height="14"/></g><g fill="#4c4c4c"><rect x="2" y="0" width="2.6" height="8"/><rect x="5.8" y="0" width="2.6" height="8"/><rect x="9.6" y="0" width="2.6" height="8"/></g></svg>
<div style="left:206px;top:459px;width:248px;height:54px;background:#4c4c4c;"></div>
<div style="left:206px;top:459px;width:7px;height:54px;background:#7a7a7a;"></div>
<div class="t" style="left:220.00px;top:465.86px;font-size:14.2px;line-height:17px;color:#ececec;font-weight:bold;transform:scaleX(0.9215);transform-origin:0 50%;">S1 Effect</div>
<div style="left:347px;top:463.6px;width:25.8px;height:20.4px;border:1px solid #2a2a2a;border-radius:2px;background:linear-gradient(#6a6a6a 0 42%,#555 42%);"></div>
<div style="left:354.5px;top:468.5px;width:11px;height:11px;background:#9a9a9a;border-radius:50%;"></div>
<div style="left:377px;top:463.6px;width:25.8px;height:20.4px;border:1px solid #2a2a2a;border-radius:2px;background:linear-gradient(#7c7c7c 0 42%,#646464 42%);"></div>
<div class="t" style="left:384.73px;top:464.88px;font-size:15.5px;line-height:19px;color:#ececec;font-weight:bold;">S</div>
<div style="left:407.3px;top:463.6px;width:25.8px;height:20.4px;border:1px solid #2a2a2a;border-radius:2px;background:linear-gradient(#7c7c7c 0 42%,#646464 42%);"></div>
<div class="t" style="left:413.74px;top:464.88px;font-size:15.5px;line-height:19px;color:#ececec;font-weight:bold;">M</div>
<div style="left:244.2px;top:488.2px;width:159px;height:20.8px;background:#0e0e0e;border-radius:2px;"></div>
<div style="left:246px;top:489.5px;width:123px;height:18px;background:#452b15;"></div>
<div style="left:368px;top:489.5px;width:2px;height:18px;background:#f58220;"></div>
<div style="left:407.3px;top:488.6px;width:25.8px;height:20.2px;border:1px solid #2a2a2a;border-radius:2px;background:linear-gradient(#7c7c7c 0 42%,#646464 42%);"></div>
<div style="left:414.3px;top:493px;width:12px;height:2.6px;background:#fff;"></div>
<div style="left:414.3px;top:497px;width:12px;height:2.6px;background:#fff;"></div>
<div style="left:414.3px;top:501px;width:12px;height:2.6px;background:#fff;"></div>
<div style="left:437px;top:463.5px;width:13px;height:46px;background:#2d2d2d;"></div>
<svg style="left:222px;top:492px;" width="14" height="13" viewBox="0 0 14 13"><path d="M0 2H7.5V10M3.5 6.5L7.5 10.5L11.5 6.5" fill="none" stroke="#aaa" stroke-width="1.7"/></svg>
<div style="left:206px;top:515px;width:248px;height:54px;background:#4c4c4c;"></div>
<div style="left:206px;top:515px;width:7px;height:54px;background:#7a7a7a;"></div>
<div class="t" style="left:220.00px;top:521.86px;font-size:14.2px;line-height:17px;color:#ececec;font-weight:bold;transform:scaleX(0.9612);transform-origin:0 50%;">Master</div>
<div style="left:347px;top:519.6px;width:25.8px;height:20.4px;border:1px solid #2a2a2a;border-radius:2px;background:linear-gradient(#6a6a6a 0 42%,#555 42%);"></div>
<div style="left:354.5px;top:524.5px;width:11px;height:11px;background:#9a9a9a;border-radius:50%;"></div>
<div style="left:377px;top:519.6px;width:25.8px;height:20.4px;border:1px solid #2a2a2a;border-radius:2px;background:linear-gradient(#7c7c7c 0 42%,#646464 42%);"></div>
<div class="t" style="left:384.73px;top:520.88px;font-size:15.5px;line-height:19px;color:#ececec;font-weight:bold;">S</div>
<div style="left:407.3px;top:519.6px;width:25.8px;height:20.4px;border:1px solid #2a2a2a;border-radius:2px;background:linear-gradient(#7c7c7c 0 42%,#646464 42%);"></div>
<div class="t" style="left:413.74px;top:520.88px;font-size:15.5px;line-height:19px;color:#ececec;font-weight:bold;">M</div>
<div style="left:244.2px;top:544.2px;width:159px;height:20.8px;background:#0e0e0e;border-radius:2px;"></div>
<div style="left:246px;top:545.5px;width:123px;height:18px;background:#452b15;"></div>
<div style="left:368px;top:545.5px;width:2px;height:18px;background:#f58220;"></div>
<div style="left:407.3px;top:544.6px;width:25.8px;height:20.2px;border:1px solid #2a2a2a;border-radius:2px;background:linear-gradient(#7c7c7c 0 42%,#646464 42%);"></div>
<div style="left:414.3px;top:549px;width:12px;height:2.6px;background:#fff;"></div>
<div style="left:414.3px;top:553px;width:12px;height:2.6px;background:#fff;"></div>
<div style="left:414.3px;top:557px;width:12px;height:2.6px;background:#fff;"></div>
<div style="left:437px;top:519.5px;width:13px;height:46px;background:#2d2d2d;"></div>
<svg style="left:221px;top:547px;" width="15" height="14" viewBox="0 0 15 14"><path d="M1 9L0 3L4 6L7.5 0L11 6L15 3L14 9Z M1 10.5H14V13H1Z" fill="#aaa"/></svg>
<svg style="left:324px;top:222px;" width="13" height="13" viewBox="0 0 13 13"><path d="M4.5 0H8.5V4.5H13V8.5H8.5V13H4.5V8.5H0V4.5H4.5Z" fill="#bdbdbd"/></svg>
<div style="left:204px;top:575px;width:25.5px;height:26px;background:#4c4c4c;border:1px solid #2a2a2a;border-radius:2px;"></div>
<div style="left:234px;top:575px;width:25.5px;height:26px;background:#2e2e2e;border:1px solid #2a2a2a;border-radius:2px;"></div>
<div style="left:264px;top:575px;width:25.5px;height:26px;background:#2e2e2e;border:1px solid #2a2a2a;border-radius:2px;"></div>
<div style="left:294px;top:575px;width:25.5px;height:26px;background:#2e2e2e;border:1px solid #2a2a2a;border-radius:2px;"></div>
<svg style="left:211px;top:581px;" width="13" height="13" viewBox="0 0 13 13"><g fill="#f0f0f0"><path d="M1.3 4L5.8 0.8V3H11.3V5H5.8V7.2Z"/><path d="M11.7 9.2L7.2 6V8.2H1.7V10.2H7.2V12.4Z"/></g></svg>
<svg style="left:240px;top:582px;" width="15" height="12" viewBox="0 0 15 12"><g fill="#f58220"><rect x="0" y="0" width="6.5" height="2.2"/><rect x="0" y="3.6" width="6.5" height="2.2"/><rect x="0" y="7.2" width="6.5" height="2.2"/><rect x="8" y="0" width="6.5" height="3.4"/><rect x="8" y="5" width="6.5" height="4.4"/></g></svg>
<svg style="left:269px;top:580px;" width="16" height="16" viewBox="0 0 16 16"><path d="M3 3.8H8.8V12.5M4.6 8.6L8.8 12.8L13 8.6" fill="none" stroke="#f58220" stroke-width="2.5"/></svg>
<svg style="left:300px;top:581px;" width="14" height="14" viewBox="0 0 14 14"><path d="M2.4 2L12.2 11.8M12.2 2L2.4 11.8" fill="none" stroke="#f58220" stroke-width="2.5"/></svg>
<div style="left:454.5px;top:575.3px;width:987.5px;height:25.7px;background:#4c4c4c;border:1px solid #2a2a2a;border-radius:2px;background:linear-gradient(#626262 0 6px,#4d4d4d 6px);"></div>
<div style="left:454.5px;top:575.3px;width:25px;height:25.7px;background:#4c4c4c;border:1px solid #2a2a2a;"></div>
<div style="left:1417.5px;top:575.3px;width:24.5px;height:25.7px;background:#4c4c4c;border:1px solid #2a2a2a;"></div>
<svg style="left:461px;top:583px;" width="10" height="11" viewBox="0 0 10 11"><path d="M9 0.5V10.5L0.5 5.5Z" fill="#9a9a9a"/></svg>
<svg style="left:1425px;top:583px;" width="10" height="11" viewBox="0 0 10 11"><path d="M0.5 0.5V10.5L9 5.5Z" fill="#9a9a9a"/></svg>
<div style="left:1447.3px;top:575px;width:25.7px;height:26px;background:#2e2e2e;border:1px solid #2a2a2a;border-radius:2px;"></div>
<svg style="left:1451px;top:579px;" width="18" height="18" viewBox="0 0 18 18"><g fill="none" stroke="#f58220" stroke-width="1.4"><circle cx="5" cy="6.5" r="2"/><circle cx="12" cy="2.8" r="2"/><path d="M6.8 5.5L10.2 3.8"/><rect x="1.5" y="11" width="6.5" height="4.5" rx="1.5"/><rect x="9" y="11" width="6.5" height="4.5" rx="1.5"/><path d="M6 13.2H11"/></g></svg>
<div style="left:1477px;top:575px;width:111px;height:26px;background:#2e2e2e;border-radius:2px;"></div>
<div class="t" style="left:1541.00px;top:579.17px;font-size:15px;line-height:18px;color:#ececec;transform:scaleX(0.9248);transform-origin:0 50%;">1/16</div>
<svg style="left:1575px;top:584px;" width="8" height="6" viewBox="0 0 8 6"><path d="M0 5H7L3.5 0.5Z" fill="#fff"/></svg>
<div style="left:1592.3px;top:575px;width:25.7px;height:26px;background:#2e2e2e;border:1px solid #2a2a2a;border-radius:2px;"></div>
<svg style="left:1598px;top:580px;" width="16" height="16" viewBox="0 0 16 16"><g fill="none" stroke="#f58220" stroke-width="1.5"><path d="M2 4H13M10 1L13 4L10 7"/></g><g fill="#8a5a20"><rect x="3" y="8" width="1.8" height="6"/><rect x="6.5" y="7" width="1.8" height="7"/><rect x="10" y="8" width="1.8" height="6"/></g></svg>
<div style="left:200px;top:613px;width:6.5px;height:300px;background:#ff5a00;"></div>
<div style="left:206.5px;top:613px;width:34.5px;height:300px;background:#4c4c4c;"></div>
<div class="t" style="left:224px;top:765px;width:0;height:0;"><div class="t" style="left:-50px;top:-9px;width:100px;height:18px;line-height:18px;text-align:center;font-size:13px;font-weight:bold;color:#ececec;transform:rotate(-90deg);letter-spacing:-0.15px;">POLYSYNTH</div></div>
<div style="left:241px;top:628px;width:753px;height:273.5px;background:#4c4c4c;border-radius:0 5px 5px 0;"></div>
<div style="left:241px;top:676px;width:9px;height:222px;background:rgba(0,0,0,.25);"></div>
<div style="left:241px;top:632px;width:209px;height:40.7px;background:#0e0e0e;border-radius:0 2px 2px 0;"></div>
<svg style="left:241px;top:632px;" width="209" height="40" viewBox="0 0 209 40"><path d="M0 19.5L59 25.2V15.3L168 25.2V15.3L209 19" fill="none" stroke="#f58220" stroke-width="1.3"/></svg>
<div style="left:241px;top:767.5px;width:209px;height:40.7px;background:#0e0e0e;border-radius:0 2px 2px 0;"></div>
<svg style="left:241px;top:767.5px;" width="209" height="40" viewBox="0 0 209 40"><path d="M0 15H3V25.5H59.5V15H112V25.5H168V15H209" fill="none" stroke="#f58220" stroke-width="1.3"/></svg>
<svg style="left:239.5px;top:680px;" width="39" height="39" viewBox="0 0 39 39"><path d="M10.50 30.22 A14 14 0 1 1 28.50 30.22" fill="none" stroke="#545454" stroke-width="5"/><path d="M8.89 32.14 A16.5 16.5 0 1 1 30.11 32.14" fill="none" stroke="#727272" stroke-width="1.5"/><circle cx="19.5" cy="3" r="1.7" fill="#f58220"/><circle cx="19.5" cy="19.5" r="11.5" fill="#2e2e2e"/><circle cx="19.5" cy="19.5" r="10.5" fill="#6e6e6e"/><path d="M9.11 17.97 A10.5 10.5 0 0 1 29.89 17.97 Z" fill="#8c8c8c"/><line x1="19.50" y1="16.62" x2="19.50" y2="9.15" stroke="#ffffff" stroke-width="2.4"/></svg>
<svg style="left:281.5px;top:680px;" width="39" height="39" viewBox="0 0 39 39"><path d="M10.50 30.22 A14 14 0 1 1 28.50 30.22" fill="none" stroke="#545454" stroke-width="5"/><path d="M8.89 32.14 A16.5 16.5 0 1 1 30.11 32.14" fill="none" stroke="#727272" stroke-width="1.5"/><circle cx="19.5" cy="19.5" r="11.5" fill="#2e2e2e"/><circle cx="19.5" cy="19.5" r="10.5" fill="#6e6e6e"/><path d="M9.11 17.97 A10.5 10.5 0 0 1 29.89 17.97 Z" fill="#8c8c8c"/><line x1="17.47" y1="21.53" x2="12.18" y2="26.82" stroke="#ffffff" stroke-width="2.4"/></svg>
<svg style="left:321.5px;top:680px;" width="39" height="39" viewBox="0 0 39 39"><path d="M10.50 30.22 A14 14 0 1 1 28.50 30.22" fill="none" stroke="#545454" stroke-width="5"/><path d="M8.89 32.14 A16.5 16.5 0 1 1 30.11 32.14" fill="none" stroke="#727272" stroke-width="1.5"/><circle cx="19.5" cy="19.5" r="11.5" fill="#2e2e2e"/><circle cx="19.5" cy="19.5" r="10.5" fill="#6e6e6e"/><path d="M9.11 17.97 A10.5 10.5 0 0 1 29.89 17.97 Z" fill="#8c8c8c"/><line x1="17.47" y1="21.53" x2="12.18" y2="26.82" stroke="#ffffff" stroke-width="2.4"/></svg>
<svg style="left:364.5px;top:680px;" width="39" height="39" viewBox="0 0 39 39"><path d="M8.89 32.14 A16.5 16.5 0 0 1 5.21 27.75" fill="none" stroke="#c0631c" stroke-width="2.6"/><circle cx="19.5" cy="19.5" r="11.5" fill="#2e2e2e"/><circle cx="19.5" cy="19.5" r="10.5" fill="#5c5c5c"/><path d="M9.11 17.97 A10.5 10.5 0 0 1 29.89 17.97 Z" fill="#6e6e6e"/><line x1="16.43" y1="21.07" x2="11.30" y2="23.68" stroke="#a0a0a0" stroke-width="3"/></svg>
<svg style="left:407.5px;top:680px;" width="39" height="39" viewBox="0 0 39 39"><path d="M10.50 30.22 A14 14 0 1 1 28.50 30.22" fill="none" stroke="#545454" stroke-width="5"/><path d="M8.89 32.14 A16.5 16.5 0 1 1 30.11 32.14" fill="none" stroke="#727272" stroke-width="1.5"/><path d="M7.63 30.96 A16.5 16.5 0 1 1 31.37 30.96" fill="none" stroke="#bd601c" stroke-width="2.6"/><circle cx="19.5" cy="19.5" r="11.5" fill="#2e2e2e"/><circle cx="19.5" cy="19.5" r="10.5" fill="#5c5c5c"/><path d="M9.11 17.97 A10.5 10.5 0 0 1 29.89 17.97 Z" fill="#6e6e6e"/><line x1="21.53" y1="21.53" x2="26.82" y2="26.82" stroke="#a0a0a0" stroke-width="2.4"/></svg>
<div class="t" style="left:241.00px;top:714.67px;font-size:15px;line-height:18px;color:#ececec;transform:scaleX(0.8761);transform-origin:0 50%;">Shape</div>
<div class="t" style="left:289.50px;top:714.67px;font-size:15px;line-height:18px;color:#ececec;transform:scaleX(0.8617);transform-origin:0 50%;">Sub</div>
<div class="t" style="left:326.50px;top:714.67px;font-size:15px;line-height:18px;color:#ececec;transform:scaleX(0.8696);transform-origin:0 50%;">Sync</div>
<div class="t" style="left:363.50px;top:714.67px;font-size:15px;line-height:18px;color:#8e8e8e;transform:scaleX(0.9209);transform-origin:0 50%;">Unison</div>
<svg style="left:418px;top:718px;" width="18" height="11" viewBox="0 0 18 11"><g fill="none" stroke="#8e8e8e" stroke-width="1.2"><circle cx="6" cy="5.5" r="4.3"/><circle cx="11.5" cy="5.5" r="4.3"/></g></svg>
<div style="left:241px;top:737px;width:39px;height:21px;background:#0e0e0e;border-radius:0 2px 2px 0;"></div>
<div style="left:241px;top:738px;width:18px;height:19px;background:#452b15;"></div>
<div style="left:258.5px;top:738px;width:2px;height:19px;background:#f58220;"></div>
<div style="left:284px;top:737px;width:36px;height:21px;background:#0e0e0e;border-radius:2px;"></div>
<div style="left:285px;top:738px;width:17px;height:19px;background:#452b15;"></div>
<div style="left:301.5px;top:738px;width:2px;height:19px;background:#f58220;"></div>
<div style="left:324px;top:737px;width:36px;height:21px;background:#0e0e0e;border-radius:2px;"></div>
<div class="t" style="left:336.63px;top:740.16px;font-size:13.5px;line-height:16px;color:#8e8e8e;font-weight:bold;">R</div>
<div style="left:364px;top:737px;width:41px;height:21px;background:#0e0e0e;border-radius:2px;"></div>
<div class="t" style="left:384.98px;top:740.16px;font-size:13.5px;line-height:16px;color:#f58220;font-weight:bold;">1v</div>
<div style="left:409px;top:737px;width:36px;height:21px;background:#0e0e0e;border-radius:2px;"></div>
<div style="left:426.5px;top:738px;width:2px;height:19px;background:#f58220;"></div>
<svg style="left:239.5px;top:815px;" width="39" height="39" viewBox="0 0 39 39"><path d="M10.50 30.22 A14 14 0 1 1 28.50 30.22" fill="none" stroke="#545454" stroke-width="5"/><path d="M8.89 32.14 A16.5 16.5 0 1 1 30.11 32.14" fill="none" stroke="#727272" stroke-width="1.5"/><path d="M8.89 32.14 A16.5 16.5 0 0 1 19.50 3.00" fill="none" stroke="#f58220" stroke-width="2.6"/><circle cx="19.5" cy="19.5" r="11.5" fill="#2e2e2e"/><circle cx="19.5" cy="19.5" r="10.5" fill="#6e6e6e"/><path d="M9.11 17.97 A10.5 10.5 0 0 1 29.89 17.97 Z" fill="#8c8c8c"/><line x1="17.47" y1="21.53" x2="12.18" y2="26.82" stroke="#ffffff" stroke-width="2.4"/></svg>
<svg style="left:281.5px;top:815px;" width="39" height="39" viewBox="0 0 39 39"><path d="M10.50 30.22 A14 14 0 1 1 28.50 30.22" fill="none" stroke="#545454" stroke-width="5"/><path d="M8.89 32.14 A16.5 16.5 0 1 1 30.11 32.14" fill="none" stroke="#727272" stroke-width="1.5"/><circle cx="19.5" cy="19.5" r="11.5" fill="#2e2e2e"/><circle cx="19.5" cy="19.5" r="10.5" fill="#6e6e6e"/><path d="M9.11 17.97 A10.5 10.5 0 0 1 29.89 17.97 Z" fill="#8c8c8c"/><line x1="17.47" y1="21.53" x2="12.18" y2="26.82" stroke="#ffffff" stroke-width="2.4"/></svg>
<svg style="left:321.5px;top:815px;" width="39" height="39" viewBox="0 0 39 39"><path d="M10.50 30.22 A14 14 0 1 1 28.50 30.22" fill="none" stroke="#545454" stroke-width="5"/><path d="M8.89 32.14 A16.5 16.5 0 1 1 30.11 32.14" fill="none" stroke="#727272" stroke-width="1.5"/><circle cx="19.5" cy="19.5" r="11.5" fill="#2e2e2e"/><circle cx="19.5" cy="19.5" r="10.5" fill="#6e6e6e"/><path d="M9.11 17.97 A10.5 10.5 0 0 1 29.89 17.97 Z" fill="#8c8c8c"/><line x1="17.47" y1="21.53" x2="12.18" y2="26.82" stroke="#ffffff" stroke-width="2.4"/></svg>
<svg style="left:364.5px;top:815px;" width="39" height="39" viewBox="0 0 39 39"><path d="M8.89 32.14 A16.5 16.5 0 0 1 7.24 30.54" fill="none" stroke="#c0631c" stroke-width="2.6"/><circle cx="19.5" cy="19.5" r="11.5" fill="#2e2e2e"/><circle cx="19.5" cy="19.5" r="10.5" fill="#5c5c5c"/><path d="M9.11 17.97 A10.5 10.5 0 0 1 29.89 17.97 Z" fill="#6e6e6e"/><line x1="16.43" y1="21.07" x2="11.30" y2="23.68" stroke="#a0a0a0" stroke-width="3"/></svg>
<svg style="left:407.5px;top:815px;" width="39" height="39" viewBox="0 0 39 39"><path d="M10.50 30.22 A14 14 0 1 1 28.50 30.22" fill="none" stroke="#545454" stroke-width="5"/><path d="M8.89 32.14 A16.5 16.5 0 1 1 30.11 32.14" fill="none" stroke="#727272" stroke-width="1.5"/><path d="M7.63 30.96 A16.5 16.5 0 1 1 31.37 30.96" fill="none" stroke="#bd601c" stroke-width="2.6"/><circle cx="19.5" cy="19.5" r="11.5" fill="#2e2e2e"/><circle cx="19.5" cy="19.5" r="10.5" fill="#5c5c5c"/><path d="M9.11 17.97 A10.5 10.5 0 0 1 29.89 17.97 Z" fill="#6e6e6e"/><line x1="21.53" y1="21.53" x2="26.82" y2="26.82" stroke="#a0a0a0" stroke-width="2.4"/></svg>
<div class="t" style="left:241.00px;top:849.67px;font-size:15px;line-height:18px;color:#ececec;transform:scaleX(0.8761);transform-origin:0 50%;">Shape</div>
<div class="t" style="left:289.50px;top:849.67px;font-size:15px;line-height:18px;color:#ececec;transform:scaleX(0.8617);transform-origin:0 50%;">Sub</div>
<div class="t" style="left:326.50px;top:849.67px;font-size:15px;line-height:18px;color:#ececec;transform:scaleX(0.8696);transform-origin:0 50%;">Sync</div>
<div class="t" style="left:363.50px;top:849.67px;font-size:15px;line-height:18px;color:#8e8e8e;transform:scaleX(0.9209);transform-origin:0 50%;">Unison</div>
<svg style="left:418px;top:853px;" width="18" height="11" viewBox="0 0 18 11"><g fill="none" stroke="#8e8e8e" stroke-width="1.2"><circle cx="6" cy="5.5" r="4.3"/><circle cx="11.5" cy="5.5" r="4.3"/></g></svg>
<div style="left:241px;top:872px;width:39px;height:21px;background:#0e0e0e;border-radius:0 2px 2px 0;"></div>
<div style="left:241px;top:873px;width:18px;height:19px;background:#452b15;"></div>
<div style="left:258.5px;top:873px;width:2px;height:19px;background:#f58220;"></div>
<div style="left:284px;top:872px;width:36px;height:21px;background:#0e0e0e;border-radius:2px;"></div>
<div style="left:285px;top:873px;width:17px;height:19px;background:#452b15;"></div>
<div style="left:301.5px;top:873px;width:2px;height:19px;background:#f58220;"></div>
<div style="left:324px;top:872px;width:36px;height:21px;background:#0e0e0e;border-radius:2px;"></div>
<div class="t" style="left:336.63px;top:875.16px;font-size:13.5px;line-height:16px;color:#8e8e8e;font-weight:bold;">R</div>
<div style="left:364px;top:872px;width:41px;height:21px;background:#0e0e0e;border-radius:2px;"></div>
<div class="t" style="left:384.98px;top:875.16px;font-size:13.5px;line-height:16px;color:#f58220;font-weight:bold;">1v</div>
<div style="left:409px;top:872px;width:36px;height:21px;background:#0e0e0e;border-radius:2px;"></div>
<div style="left:426.5px;top:873px;width:2px;height:19px;background:#f58220;"></div>
<div style="left:454px;top:632px;width:175.5px;height:41px;background:#1a1a1a;border-radius:3px;"></div>
<div style="left:454.8px;top:632.8px;width:57.4px;height:19.2px;background:#f58220;"></div>
<div class="t" style="left:472.00px;top:634.95px;font-size:13px;line-height:16px;color:#111;letter-spacing:-0.038px;">MIX</div>
<div style="left:512.9px;top:632.8px;width:57.4px;height:19.2px;background:#6e6e6e;"></div>
<div class="t" style="left:528.10px;top:634.95px;font-size:13px;line-height:16px;color:#ececec;transform:scaleX(0.9584);transform-origin:0 50%;">NEG</div>
<div style="left:571px;top:632.8px;width:57.4px;height:19.2px;background:#6e6e6e;"></div>
<div class="t" style="left:583.70px;top:634.95px;font-size:13px;line-height:16px;color:#ececec;transform:scaleX(0.9632);transform-origin:0 50%;">WIPE</div>
<div style="left:454.8px;top:652.8px;width:57.4px;height:19.2px;background:#6e6e6e;"></div>
<div class="t" style="left:474.00px;top:654.95px;font-size:13px;line-height:16px;color:#ececec;transform:scaleX(0.9743);transform-origin:0 50%;">AM</div>
<div style="left:512.9px;top:652.8px;width:57.4px;height:19.2px;background:#6e6e6e;"></div>
<div class="t" style="left:526.10px;top:654.95px;font-size:13px;line-height:16px;color:#ececec;letter-spacing:-0.196px;">SIGN</div>
<div style="left:571px;top:652.8px;width:57.4px;height:19.2px;background:#6e6e6e;"></div>
<div class="t" style="left:586.20px;top:654.95px;font-size:13px;line-height:16px;color:#ececec;transform:scaleX(0.9584);transform-origin:0 50%;">MAX</div>
<div style="left:634px;top:632px;width:266px;height:41px;background:#1a1a1a;border-radius:3px;"></div>
<div style="left:634.8px;top:632.8px;width:65.4px;height:19.2px;background:#f58220;"></div>
<svg style="left:657.5px;top:633.4px;" width="20" height="18" viewBox="0 0 20 18"><g transform="translate(10,9)"><path d="M-7 -3C-2 -3 -1 -2 1 1L4 5" fill="none" stroke="#111" stroke-width="1.3"/></g></svg>
<div style="left:700.9px;top:632.8px;width:65.4px;height:19.2px;background:#6e6e6e;"></div>
<svg style="left:723.6px;top:633.4px;" width="20" height="18" viewBox="0 0 20 18"><g transform="translate(10,9)"><path d="M-7 -3H-1C1 -3 1 -1 2 4M4 -4V0H7V-4M7 0V4" fill="none" stroke="#f0f0f0" stroke-width="1.3"/></g></svg>
<div style="left:767px;top:632.8px;width:65.4px;height:19.2px;background:#6e6e6e;"></div>
<svg style="left:789.7px;top:633.4px;" width="20" height="18" viewBox="0 0 20 18"><g transform="translate(10,9)"><path d="M-5 4C-3 -5 3 -5 5 4" fill="none" stroke="#f0f0f0" stroke-width="1.3"/></g></svg>
<div style="left:833.1px;top:632.8px;width:65.4px;height:19.2px;background:#6e6e6e;"></div>
<svg style="left:855.8px;top:633.4px;" width="20" height="18" viewBox="0 0 20 18"><g transform="translate(10,9)"><path d="M-7 4C-4 3 -3 -4 -1 -4S1 3 3 4M5 -4V0H8V-4M8 0V4" fill="none" stroke="#f0f0f0" stroke-width="1.3"/></g></svg>
<div style="left:634.8px;top:652.8px;width:65.4px;height:19.2px;background:#6e6e6e;"></div>
<svg style="left:657.5px;top:653.4px;" width="20" height="18" viewBox="0 0 20 18"><g transform="translate(10,9)"><path d="M-6 5C-5 -1 -3 -3 6 -3" fill="none" stroke="#f0f0f0" stroke-width="1.3"/></g></svg>
<div style="left:700.9px;top:652.8px;width:65.4px;height:19.2px;background:#6e6e6e;"></div>
<svg style="left:723.6px;top:653.4px;" width="20" height="18" viewBox="0 0 20 18"><g transform="translate(10,9)"><path d="M-1 5C0 -1 1 -3 7 -3M-7 -5V-1H-4V-5M-4 -1V3" fill="none" stroke="#f0f0f0" stroke-width="1.3"/></g></svg>
<div style="left:767px;top:652.8px;width:65.4px;height:19.2px;background:#6e6e6e;"></div>
<svg style="left:789.7px;top:653.4px;" width="20" height="18" viewBox="0 0 20 18"><g transform="translate(10,9)"><path d="M-6 -4C-3 -3 -1 4 0 4S3 -3 6 -4" fill="none" stroke="#f0f0f0" stroke-width="1.3"/></g></svg>
<div style="left:833.1px;top:652.8px;width:65.4px;height:19.2px;background:#6e6e6e;"></div>
<svg style="left:855.8px;top:653.4px;" width="20" height="18" viewBox="0 0 20 18"><g transform="translate(10,9)"><path d="M-7 0H7" fill="none" stroke="#f0f0f0" stroke-width="1.3"/></g></svg>
<div style="left:455px;top:677px;width:174.5px;height:220.5px;background:#2d2d2d;border-radius:2px;"></div>
<div style="left:508px;top:708.9px;width:13px;height:2.2px;background:#4b4b4b;"></div>
<div style="left:508px;top:778.9px;width:13px;height:2.2px;background:#4b4b4b;"></div>
<div style="left:508px;top:854.4px;width:13px;height:2.2px;background:#4b4b4b;"></div>
<svg style="left:462.6px;top:685.6px;" width="48.8" height="48.8" viewBox="0 0 48.8 48.8"><path d="M10.64 40.79 A21.4 21.4 0 1 1 38.16 40.79" fill="none" stroke="#4b4b4b" stroke-width="2.3"/><path d="M10.64 40.79 A21.4 21.4 0 0 1 24.40 3.00" fill="none" stroke="#f58220" stroke-width="2.6"/><circle cx="24.4" cy="24.4" r="15.6" fill="#262626"/><circle cx="24.4" cy="24.4" r="15" fill="#4f4f4f"/><path d="M9.63 27.00 A15 15 0 1 1 39.17 27.00 Z" fill="#6e6e6e"/><line x1="21.64" y1="27.16" x2="14.47" y2="34.33" stroke="#ffffff" stroke-width="3"/></svg>
<svg style="left:517.1px;top:685.6px;" width="48.8" height="48.8" viewBox="0 0 48.8 48.8"><path d="M10.64 40.79 A21.4 21.4 0 1 1 38.16 40.79" fill="none" stroke="#4b4b4b" stroke-width="2.3"/><circle cx="24.4" cy="24.4" r="15.6" fill="#262626"/><circle cx="24.4" cy="24.4" r="15" fill="#4f4f4f"/><path d="M9.63 27.00 A15 15 0 1 1 39.17 27.00 Z" fill="#6e6e6e"/><line x1="21.64" y1="27.16" x2="14.47" y2="34.33" stroke="#ffffff" stroke-width="3"/></svg>
<svg style="left:572.6px;top:685.6px;" width="48.8" height="48.8" viewBox="0 0 48.8 48.8"><path d="M10.64 40.79 A21.4 21.4 0 1 1 38.16 40.79" fill="none" stroke="#4b4b4b" stroke-width="2.3"/><circle cx="24.4" cy="3" r="1.7" fill="#f58220"/><circle cx="24.4" cy="24.4" r="15.6" fill="#262626"/><circle cx="24.4" cy="24.4" r="15" fill="#4f4f4f"/><path d="M9.63 27.00 A15 15 0 1 1 39.17 27.00 Z" fill="#6e6e6e"/><line x1="24.40" y1="20.50" x2="24.40" y2="10.36" stroke="#ffffff" stroke-width="3"/></svg>
<svg style="left:462.6px;top:755.6px;" width="48.8" height="48.8" viewBox="0 0 48.8 48.8"><path d="M10.64 40.79 A21.4 21.4 0 1 1 38.16 40.79" fill="none" stroke="#4b4b4b" stroke-width="2.3"/><path d="M10.64 40.79 A21.4 21.4 0 0 1 16.38 4.56" fill="none" stroke="#a85a1c" stroke-width="2.6"/><circle cx="24.4" cy="24.4" r="15.6" fill="#262626"/><circle cx="24.4" cy="24.4" r="15" fill="#3f3f3f"/><path d="M9.63 27.00 A15 15 0 1 1 39.17 27.00 Z" fill="#4c4c4c"/><line x1="22.33" y1="21.09" x2="16.96" y2="12.49" stroke="#7a7a7a" stroke-width="3"/></svg>
<svg style="left:517.1px;top:755.6px;" width="48.8" height="48.8" viewBox="0 0 48.8 48.8"><path d="M10.64 40.79 A21.4 21.4 0 1 1 38.16 40.79" fill="none" stroke="#4b4b4b" stroke-width="2.3"/><circle cx="24.4" cy="24.4" r="15.6" fill="#262626"/><circle cx="24.4" cy="24.4" r="15" fill="#3f3f3f"/><path d="M9.63 27.00 A15 15 0 1 1 39.17 27.00 Z" fill="#4c4c4c"/><line x1="21.64" y1="27.16" x2="14.47" y2="34.33" stroke="#7a7a7a" stroke-width="3"/></svg>
<svg style="left:572.6px;top:755.6px;" width="48.8" height="48.8" viewBox="0 0 48.8 48.8"><path d="M10.64 40.79 A21.4 21.4 0 1 1 38.16 40.79" fill="none" stroke="#4b4b4b" stroke-width="2.3"/><circle cx="24.4" cy="3" r="1.7" fill="#f58220"/><circle cx="24.4" cy="24.4" r="15.6" fill="#262626"/><circle cx="24.4" cy="24.4" r="15" fill="#4f4f4f"/><path d="M9.63 27.00 A15 15 0 1 1 39.17 27.00 Z" fill="#6e6e6e"/><line x1="24.40" y1="20.50" x2="24.40" y2="10.36" stroke="#ffffff" stroke-width="3"/></svg>
<svg style="left:462.6px;top:831.1px;" width="48.8" height="48.8" viewBox="0 0 48.8 48.8"><path d="M10.64 40.79 A21.4 21.4 0 1 1 38.16 40.79" fill="none" stroke="#4b4b4b" stroke-width="2.3"/><circle cx="24.4" cy="3" r="1.7" fill="#f58220"/><circle cx="24.4" cy="24.4" r="15.6" fill="#262626"/><circle cx="24.4" cy="24.4" r="15" fill="#4f4f4f"/><path d="M9.63 27.00 A15 15 0 1 1 39.17 27.00 Z" fill="#6e6e6e"/><line x1="24.40" y1="20.50" x2="24.40" y2="10.36" stroke="#ffffff" stroke-width="3"/></svg>
<svg style="left:517.1px;top:831.1px;" width="48.8" height="48.8" viewBox="0 0 48.8 48.8"><path d="M10.64 40.79 A21.4 21.4 0 1 1 38.16 40.79" fill="none" stroke="#4b4b4b" stroke-width="2.3"/><circle cx="24.4" cy="24.4" r="15.6" fill="#262626"/><circle cx="24.4" cy="24.4" r="15" fill="#4f4f4f"/><path d="M9.63 27.00 A15 15 0 1 1 39.17 27.00 Z" fill="#6e6e6e"/><line x1="21.64" y1="27.16" x2="14.47" y2="34.33" stroke="#ffffff" stroke-width="3"/></svg>
<svg style="left:572.6px;top:831.1px;" width="48.8" height="48.8" viewBox="0 0 48.8 48.8"><path d="M10.64 40.79 A21.4 21.4 0 1 1 38.16 40.79" fill="none" stroke="#4b4b4b" stroke-width="2.3"/><circle cx="24.4" cy="24.4" r="15.6" fill="#262626"/><circle cx="24.4" cy="24.4" r="15" fill="#4f4f4f"/><path d="M9.63 27.00 A15 15 0 1 1 39.17 27.00 Z" fill="#6e6e6e"/><line x1="21.64" y1="27.16" x2="14.47" y2="34.33" stroke="#ffffff" stroke-width="3"/></svg>
<div class="t" style="left:466.83px;top:728.67px;font-size:15px;line-height:18px;color:#d8d8d8;font-weight:bold;">1</div>
<div class="t" style="left:497.33px;top:728.67px;font-size:15px;line-height:18px;color:#6e6e6e;">2</div>
<div class="t" style="left:525.00px;top:728.67px;font-size:15px;line-height:18px;color:#ececec;transform:scaleX(0.9126);transform-origin:0 50%;">Noise</div>
<svg style="left:582px;top:731px;" width="28" height="13" viewBox="0 0 28 13"><path d="M1 3.5L5 6.5L1 9.5Z" fill="#fff"/><rect x="8" y="1" width="19" height="11" rx="3.5" fill="#fff"/><path d="M11 6.5H24M14 3.5L11 6.5L14 9.5M21 3.5L24 6.5L21 9.5" fill="none" stroke="#2d2d2d" stroke-width="1.5"/></svg>
<div style="left:475px;top:806.5px;width:13px;height:1.5px;background:#c8c8c8;"></div>
<svg style="left:497px;top:804px;" width="8" height="6" viewBox="0 0 8 6"><path d="M0 0H7L3.5 4.2Z" fill="#fff"/></svg>
<svg style="left:534px;top:800px;" width="16" height="14" viewBox="0 0 16 14"><path d="M0 13.5C4.5 12.5 6.3 9 8 0.5C9.7 9 11.5 12.5 16 13.5Z" fill="#666"/></svg>
<div class="t" style="left:581.00px;top:799.17px;font-size:15px;line-height:18px;color:#ececec;transform:scaleX(0.9142);transform-origin:0 50%;">Drive</div>
<div class="t" style="left:471.00px;top:874.47px;font-size:15px;line-height:18px;color:#ececec;transform:scaleX(0.9596);transform-origin:0 50%;">Pitch</div>
<div class="t" style="left:525.00px;top:874.47px;font-size:15px;line-height:18px;color:#ececec;transform:scaleX(0.9138);transform-origin:0 50%;">Glide</div>
<div class="t" style="left:589.00px;top:874.47px;font-size:15px;line-height:18px;color:#ececec;transform:scaleX(0.8347);transform-origin:0 50%;">FB</div>
<div style="left:635px;top:677px;width:264.5px;height:85.5px;background:#2d2d2d;border-radius:2px;"></div>
<svg style="left:642.6px;top:685.6px;" width="48.8" height="48.8" viewBox="0 0 48.8 48.8"><path d="M10.64 40.79 A21.4 21.4 0 1 1 38.16 40.79" fill="none" stroke="#4b4b4b" stroke-width="2.3"/><path d="M10.64 40.79 A21.4 21.4 0 1 1 44.51 17.08" fill="none" stroke="#f58220" stroke-width="2.6"/><circle cx="24.4" cy="24.4" r="15.6" fill="#262626"/><circle cx="24.4" cy="24.4" r="15" fill="#4f4f4f"/><path d="M9.63 27.00 A15 15 0 1 1 39.17 27.00 Z" fill="#6e6e6e"/><line x1="28.02" y1="22.94" x2="37.42" y2="19.14" stroke="#ffffff" stroke-width="3"/></svg>
<svg style="left:692.4px;top:685.6px;" width="48.8" height="48.8" viewBox="0 0 48.8 48.8"><path d="M10.64 40.79 A21.4 21.4 0 1 1 38.16 40.79" fill="none" stroke="#4b4b4b" stroke-width="2.3"/><path d="M10.64 40.79 A21.4 21.4 0 0 1 17.08 4.29" fill="none" stroke="#f58220" stroke-width="2.6"/><circle cx="24.4" cy="24.4" r="15.6" fill="#262626"/><circle cx="24.4" cy="24.4" r="15" fill="#4f4f4f"/><path d="M9.63 27.00 A15 15 0 1 1 39.17 27.00 Z" fill="#6e6e6e"/><line x1="22.75" y1="20.87" x2="18.47" y2="11.68" stroke="#ffffff" stroke-width="3"/></svg>
<svg style="left:742.6px;top:685.6px;" width="48.8" height="48.8" viewBox="0 0 48.8 48.8"><path d="M10.64 40.79 A21.4 21.4 0 1 1 38.16 40.79" fill="none" stroke="#4b4b4b" stroke-width="2.3"/><circle cx="24.4" cy="24.4" r="15.6" fill="#262626"/><circle cx="24.4" cy="24.4" r="15" fill="#3f3f3f"/><path d="M9.63 27.00 A15 15 0 1 1 39.17 27.00 Z" fill="#4c4c4c"/><line x1="21.64" y1="27.16" x2="14.47" y2="34.33" stroke="#7a7a7a" stroke-width="3"/></svg>
<svg style="left:792.6px;top:685.6px;" width="48.8" height="48.8" viewBox="0 0 48.8 48.8"><path d="M10.64 40.79 A21.4 21.4 0 1 1 38.16 40.79" fill="none" stroke="#4b4b4b" stroke-width="2.3"/><path d="M10.64 40.79 A21.4 21.4 0 0 1 24.40 3.00" fill="none" stroke="#f58220" stroke-width="2.6"/><circle cx="24.4" cy="24.4" r="15.6" fill="#262626"/><circle cx="24.4" cy="24.4" r="15" fill="#4f4f4f"/><path d="M9.63 27.00 A15 15 0 1 1 39.17 27.00 Z" fill="#6e6e6e"/><line x1="24.40" y1="20.50" x2="24.40" y2="10.36" stroke="#ffffff" stroke-width="3"/></svg>
<svg style="left:842.6px;top:685.6px;" width="48.8" height="48.8" viewBox="0 0 48.8 48.8"><path d="M10.64 40.79 A21.4 21.4 0 1 1 38.16 40.79" fill="none" stroke="#4b4b4b" stroke-width="2.3"/><circle cx="24.4" cy="3" r="1.7" fill="#f58220"/><circle cx="24.4" cy="24.4" r="15.6" fill="#262626"/><circle cx="24.4" cy="24.4" r="15" fill="#4f4f4f"/><path d="M9.63 27.00 A15 15 0 1 1 39.17 27.00 Z" fill="#6e6e6e"/><line x1="24.40" y1="20.50" x2="24.40" y2="10.36" stroke="#ffffff" stroke-width="3"/></svg>
<svg style="left:657px;top:736px;" width="22" height="13" viewBox="0 0 22 13"><rect x="1" y="1" width="19" height="11" rx="3.5" fill="#fff"/><path d="M4 6.5H17M7 3.5L4 6.5L7 9.5M14 3.5L17 6.5L14 9.5" fill="none" stroke="#2d2d2d" stroke-width="1.5"/></svg>
<svg style="left:709px;top:736px;" width="16" height="14" viewBox="0 0 16 14"><defs><linearGradient id="bg1" x1="0" y1="0" x2="0" y2="1"><stop offset="0" stop-color="#fff"/><stop offset="1" stop-color="#9a9a9a"/></linearGradient></defs><path d="M0 13.5C4.5 12.5 6.3 9 8 0.5C9.7 9 11.5 12.5 16 13.5Z" fill="url(#bg1)"/></svg>
<div class="t" style="left:748.75px;top:734.47px;font-size:15px;line-height:18px;color:#ececec;transform:scaleX(0.8169);transform-origin:0 50%;">OFF</div>
<svg style="left:781px;top:740px;" width="8" height="6" viewBox="0 0 8 6"><path d="M0 0H7L3.5 4.2Z" fill="#fff"/></svg>
<svg style="left:803px;top:736px;" width="28" height="15" viewBox="0 0 28 15"><path d="M0.5 7L4 4.3V9.7Z M27.5 7L24 4.3V9.7Z" fill="#fff"/><g fill="#fff"><rect x="7" y="0.5" width="4.2" height="13.5"/><rect x="11.9" y="0.5" width="4.2" height="13.5"/><rect x="16.8" y="0.5" width="4.2" height="13.5"/></g><g fill="#2d2d2d"><rect x="9.9" y="0.5" width="3.2" height="8"/><rect x="14.8" y="0.5" width="3.2" height="8"/></g></svg>
<div style="left:850px;top:737.3px;width:19px;height:11.5px;background:#f0f0f0;border-radius:3.5px;"></div>
<div class="t" style="left:853.00px;top:737.81px;font-size:9.5px;line-height:11px;color:#2d2d2d;font-weight:bold;transform:scaleX(0.9471);transform-origin:0 50%;">EG</div>
<div style="left:874px;top:732px;width:21px;height:21px;background:#0e0e0e;border-radius:2px;"></div>
<svg style="left:874px;top:732px;" width="21" height="21" viewBox="0 0 21 21"><path d="M4 16L17 5" stroke="#f58220" stroke-width="1.6"/></svg>
<div class="t" style="left:657.25px;top:783.12px;font-size:10.5px;line-height:13px;color:#3fe08a;transform:scaleX(0.9034);transform-origin:0 50%;-webkit-text-stroke:0.35px #3fe08a;">FEG</div>
<svg style="left:658.5px;top:798.5px;" width="20" height="14" viewBox="0 0 20 14"><path d="M1 12L4 2.5C6.2 2.5 6.3 7.3 8.5 7.5S10.5 6.4 11.5 7S13.5 11.5 16.5 11.5" fill="none" stroke="#3fe08a" stroke-width="1.3"/></svg>
<div class="t" style="left:657.25px;top:853.12px;font-size:10.5px;line-height:13px;color:#3fe08a;transform:scaleX(0.8794);transform-origin:0 50%;-webkit-text-stroke:0.35px #3fe08a;">AEG</div>
<svg style="left:658.5px;top:868.5px;" width="20" height="14" viewBox="0 0 20 14"><path d="M1 12L4 2.5C6.2 2.5 6.3 7.3 8.5 7.5S10.5 6.4 11.5 7S13.5 11.5 16.5 11.5" fill="none" stroke="#3fe08a" stroke-width="1.3"/></svg>
<svg style="left:692.6px;top:775.6px;" width="48.8" height="48.8" viewBox="0 0 48.8 48.8"><path d="M12.51 38.57 A18.5 18.5 0 1 1 36.29 38.57" fill="none" stroke="#545454" stroke-width="5.8"/><path d="M10.64 40.79 A21.4 21.4 0 1 1 38.16 40.79" fill="none" stroke="#727272" stroke-width="1.5"/><circle cx="24.4" cy="24.4" r="15.6" fill="#2e2e2e"/><circle cx="24.4" cy="24.4" r="14.6" fill="#6e6e6e"/><path d="M9.95 22.32 A14.6 14.6 0 0 1 38.85 22.32 Z" fill="#8c8c8c"/><line x1="21.64" y1="27.16" x2="14.47" y2="34.33" stroke="#ffffff" stroke-width="3"/></svg>
<svg style="left:742.6px;top:775.6px;" width="48.8" height="48.8" viewBox="0 0 48.8 48.8"><path d="M12.51 38.57 A18.5 18.5 0 1 1 36.29 38.57" fill="none" stroke="#545454" stroke-width="5.8"/><path d="M10.64 40.79 A21.4 21.4 0 1 1 38.16 40.79" fill="none" stroke="#727272" stroke-width="1.5"/><path d="M10.64 40.79 A21.4 21.4 0 1 1 45.80 24.40" fill="none" stroke="#f58220" stroke-width="2.6"/><circle cx="24.4" cy="24.4" r="15.6" fill="#2e2e2e"/><circle cx="24.4" cy="24.4" r="14.6" fill="#6e6e6e"/><path d="M9.95 22.32 A14.6 14.6 0 0 1 38.85 22.32 Z" fill="#8c8c8c"/><line x1="28.30" y1="24.40" x2="38.44" y2="24.40" stroke="#ffffff" stroke-width="3"/></svg>
<svg style="left:792.6px;top:775.6px;" width="48.8" height="48.8" viewBox="0 0 48.8 48.8"><path d="M12.51 38.57 A18.5 18.5 0 1 1 36.29 38.57" fill="none" stroke="#545454" stroke-width="5.8"/><path d="M10.64 40.79 A21.4 21.4 0 1 1 38.16 40.79" fill="none" stroke="#727272" stroke-width="1.5"/><circle cx="24.4" cy="24.4" r="15.6" fill="#2e2e2e"/><circle cx="24.4" cy="24.4" r="14.6" fill="#6e6e6e"/><path d="M9.95 22.32 A14.6 14.6 0 0 1 38.85 22.32 Z" fill="#8c8c8c"/><line x1="21.64" y1="27.16" x2="14.47" y2="34.33" stroke="#ffffff" stroke-width="3"/></svg>
<svg style="left:842.6px;top:775.6px;" width="48.8" height="48.8" viewBox="0 0 48.8 48.8"><path d="M12.51 38.57 A18.5 18.5 0 1 1 36.29 38.57" fill="none" stroke="#545454" stroke-width="5.8"/><path d="M10.64 40.79 A21.4 21.4 0 1 1 38.16 40.79" fill="none" stroke="#727272" stroke-width="1.5"/><circle cx="24.4" cy="24.4" r="15.6" fill="#2e2e2e"/><circle cx="24.4" cy="24.4" r="14.6" fill="#6e6e6e"/><path d="M9.95 22.32 A14.6 14.6 0 0 1 38.85 22.32 Z" fill="#8c8c8c"/><line x1="21.64" y1="27.16" x2="14.47" y2="34.33" stroke="#ffffff" stroke-width="3"/></svg>
<svg style="left:692.6px;top:845.6px;" width="48.8" height="48.8" viewBox="0 0 48.8 48.8"><path d="M12.51 38.57 A18.5 18.5 0 1 1 36.29 38.57" fill="none" stroke="#545454" stroke-width="5.8"/><path d="M10.64 40.79 A21.4 21.4 0 1 1 38.16 40.79" fill="none" stroke="#727272" stroke-width="1.5"/><path d="M10.64 40.79 A21.4 21.4 0 0 1 9.01 39.27" fill="none" stroke="#f58220" stroke-width="2.6"/><circle cx="24.4" cy="24.4" r="15.6" fill="#2e2e2e"/><circle cx="24.4" cy="24.4" r="14.6" fill="#6e6e6e"/><path d="M9.95 22.32 A14.6 14.6 0 0 1 38.85 22.32 Z" fill="#8c8c8c"/><line x1="20.96" y1="26.23" x2="12.00" y2="30.99" stroke="#ffffff" stroke-width="3"/></svg>
<svg style="left:742.6px;top:845.6px;" width="48.8" height="48.8" viewBox="0 0 48.8 48.8"><path d="M12.51 38.57 A18.5 18.5 0 1 1 36.29 38.57" fill="none" stroke="#545454" stroke-width="5.8"/><path d="M10.64 40.79 A21.4 21.4 0 1 1 38.16 40.79" fill="none" stroke="#727272" stroke-width="1.5"/><path d="M10.64 40.79 A21.4 21.4 0 0 1 24.40 3.00" fill="none" stroke="#f58220" stroke-width="2.6"/><circle cx="24.4" cy="24.4" r="15.6" fill="#2e2e2e"/><circle cx="24.4" cy="24.4" r="14.6" fill="#6e6e6e"/><path d="M9.95 22.32 A14.6 14.6 0 0 1 38.85 22.32 Z" fill="#8c8c8c"/><line x1="24.40" y1="20.50" x2="24.40" y2="10.36" stroke="#ffffff" stroke-width="3"/></svg>
<svg style="left:792.6px;top:845.6px;" width="48.8" height="48.8" viewBox="0 0 48.8 48.8"><path d="M12.51 38.57 A18.5 18.5 0 1 1 36.29 38.57" fill="none" stroke="#545454" stroke-width="5.8"/><path d="M10.64 40.79 A21.4 21.4 0 1 1 38.16 40.79" fill="none" stroke="#727272" stroke-width="1.5"/><path d="M10.64 40.79 A21.4 21.4 0 1 1 42.55 35.74" fill="none" stroke="#f58220" stroke-width="2.6"/><circle cx="24.4" cy="24.4" r="15.6" fill="#2e2e2e"/><circle cx="24.4" cy="24.4" r="14.6" fill="#6e6e6e"/><path d="M9.95 22.32 A14.6 14.6 0 0 1 38.85 22.32 Z" fill="#8c8c8c"/><line x1="27.78" y1="26.35" x2="36.56" y2="31.42" stroke="#ffffff" stroke-width="3"/></svg>
<svg style="left:842.6px;top:845.6px;" width="48.8" height="48.8" viewBox="0 0 48.8 48.8"><path d="M12.51 38.57 A18.5 18.5 0 1 1 36.29 38.57" fill="none" stroke="#545454" stroke-width="5.8"/><path d="M10.64 40.79 A21.4 21.4 0 1 1 38.16 40.79" fill="none" stroke="#727272" stroke-width="1.5"/><path d="M10.64 40.79 A21.4 21.4 0 0 1 6.25 13.06" fill="none" stroke="#f58220" stroke-width="2.6"/><circle cx="24.4" cy="24.4" r="15.6" fill="#2e2e2e"/><circle cx="24.4" cy="24.4" r="14.6" fill="#6e6e6e"/><path d="M9.95 22.32 A14.6 14.6 0 0 1 38.85 22.32 Z" fill="#8c8c8c"/><line x1="21.02" y1="22.45" x2="12.24" y2="17.38" stroke="#ffffff" stroke-width="3"/></svg>
<div class="t" style="left:712.67px;top:826.94px;font-size:12px;line-height:14px;color:#ececec;font-weight:bold;">A</div>
<div class="t" style="left:762.67px;top:826.94px;font-size:12px;line-height:14px;color:#ececec;font-weight:bold;">D</div>
<div class="t" style="left:813.00px;top:826.94px;font-size:12px;line-height:14px;color:#ececec;font-weight:bold;">S</div>
<div class="t" style="left:862.67px;top:826.94px;font-size:12px;line-height:14px;color:#ececec;font-weight:bold;">R</div>
<div style="left:904px;top:632.5px;width:86.5px;height:40px;background:#2d2d2d;border-radius:2px;"></div>
<svg style="left:907px;top:636.5px;" width="80" height="5" viewBox="0 0 80 5"><path d="M0.75 4.5V0.75H78.25V4.5" fill="none" stroke="#4a6e94" stroke-width="1.5"/></svg>
<div class="t" style="left:933.25px;top:646.94px;font-size:12.5px;line-height:15px;color:#ececec;font-weight:bold;letter-spacing:-0.070px;">Note</div>
<div style="left:904px;top:677px;width:86.5px;height:40.5px;background:#2d2d2d;border-radius:2px;"></div>
<svg style="left:907px;top:681px;" width="80" height="5" viewBox="0 0 80 5"><path d="M0.75 4.5V0.75H78.25V4.5" fill="none" stroke="#4a6e94" stroke-width="1.5"/></svg>
<div class="t" style="left:940.00px;top:691.44px;font-size:12.5px;line-height:15px;color:#ececec;font-weight:bold;transform:scaleX(0.8764);transform-origin:0 50%;">FX</div>
<div style="left:904px;top:722px;width:86.5px;height:175.5px;background:#2d2d2d;border-radius:2px;"></div>
<svg style="left:922.6px;top:729.1px;" width="48.8" height="48.8" viewBox="0 0 48.8 48.8"><path d="M10.64 40.79 A21.4 21.4 0 1 1 38.16 40.79" fill="none" stroke="#4b4b4b" stroke-width="2.3"/><circle cx="24.4" cy="3" r="1.7" fill="#f58220"/><circle cx="24.4" cy="24.4" r="15.6" fill="#262626"/><circle cx="24.4" cy="24.4" r="15" fill="#4f4f4f"/><path d="M9.63 27.00 A15 15 0 1 1 39.17 27.00 Z" fill="#6e6e6e"/><line x1="24.40" y1="20.50" x2="24.40" y2="10.36" stroke="#ffffff" stroke-width="3"/></svg>
<div class="t" style="left:915.49px;top:766.63px;font-size:11.5px;line-height:14px;color:#8e8e8e;font-weight:bold;">L</div>
<div class="t" style="left:970.85px;top:766.63px;font-size:11.5px;line-height:14px;color:#8e8e8e;font-weight:bold;">R</div>
<div style="left:940px;top:804.9px;width:14px;height:2.2px;background:#4b4b4b;"></div>
<svg style="left:908.6px;top:788.6px;" width="34.8" height="34.8" viewBox="0 0 34.8 34.8"><path d="M8.14 28.43 A14.4 14.4 0 1 1 26.66 28.43" fill="none" stroke="#4b4b4b" stroke-width="2.3"/><circle cx="17.4" cy="17.4" r="10.6" fill="#262626"/><circle cx="17.4" cy="17.4" r="10" fill="#4f4f4f"/><path d="M7.56 19.17 A10 10 0 1 1 27.24 19.17 Z" fill="#6e6e6e"/><line x1="15.53" y1="19.27" x2="10.65" y2="24.15" stroke="#ffffff" stroke-width="2.6"/></svg>
<svg style="left:949.6px;top:788.6px;" width="34.8" height="34.8" viewBox="0 0 34.8 34.8"><path d="M8.14 28.43 A14.4 14.4 0 1 1 26.66 28.43" fill="none" stroke="#4b4b4b" stroke-width="2.3"/><path d="M8.14 28.43 A14.4 14.4 0 1 1 26.66 28.43" fill="none" stroke="#f58220" stroke-width="2.6"/><circle cx="17.4" cy="17.4" r="10.6" fill="#262626"/><circle cx="17.4" cy="17.4" r="10" fill="#4f4f4f"/><path d="M7.56 19.17 A10 10 0 1 1 27.24 19.17 Z" fill="#6e6e6e"/><line x1="19.27" y1="19.27" x2="24.15" y2="24.15" stroke="#ffffff" stroke-width="2.6"/></svg>
<svg style="left:923px;top:822px;" width="10" height="14" viewBox="0 0 10 14"><circle cx="4.5" cy="3.5" r="2.2" fill="none" stroke="#9a9a9a" stroke-width="1.2"/><path d="M4.5 6V13" stroke="#9a9a9a" stroke-width="1.2"/></svg>
<svg style="left:944px;top:824px;" width="7" height="8" viewBox="0 0 7 8"><path d="M1 0.5L6 4L1 7.5Z" fill="#7a7a7a"/></svg>
<svg style="left:962px;top:821px;" width="12" height="14" viewBox="0 0 12 14"><path d="M1 5H4L10 0.5V13L4 9H1Z" fill="#8a8a8a"/></svg>
<svg style="left:922.6px;top:839.1px;" width="48.8" height="48.8" viewBox="0 0 48.8 48.8"><path d="M10.64 40.79 A21.4 21.4 0 1 1 38.16 40.79" fill="none" stroke="#4b4b4b" stroke-width="2.3"/><path d="M10.64 40.79 A21.4 21.4 0 1 1 42.55 13.06" fill="none" stroke="#f58220" stroke-width="2.6"/><circle cx="24.4" cy="24.4" r="15.6" fill="#262626"/><circle cx="24.4" cy="24.4" r="15" fill="#4f4f4f"/><path d="M9.63 27.00 A15 15 0 1 1 39.17 27.00 Z" fill="#6e6e6e"/><line x1="27.59" y1="22.16" x2="35.90" y2="16.35" stroke="#ffffff" stroke-width="3"/></svg>
<div class="t" style="left:935.00px;top:881.63px;font-size:11.5px;line-height:14px;color:#9a9a9a;font-weight:bold;letter-spacing:-0.092px;">OUT</div>
<svg style="left:1000.5px;top:758.5px;" width="13" height="13" viewBox="0 0 13 13"><path d="M4.7 0.5H8.3V4.7H12.5V8.3H8.3V12.5H4.7V8.3H0.5V4.7H4.7Z" fill="#c4c4c4"/></svg>
<svg style="left:476px;top:739px;" width="24" height="30" viewBox="0 0 24 30"><path d="M3 2V23L8 18.5L11.5 27L15.5 25.3L12 17H19Z" fill="#fff" stroke="#111" stroke-width="1.5"/></svg>
<div style="left:1021px;top:628px;width:537px;height:273.5px;background:#4c4c4c;border-radius:5px;"></div>
<div style="left:1024.5px;top:632.5px;width:25.5px;height:25.5px;background:#f58220;border:1px solid #2a2a2a;border-radius:3px;"></div>
<svg style="left:1029px;top:640px;" width="17" height="9" viewBox="0 0 17 9"><g fill="#111"><rect x="0" y="4" width="2" height="2"/><rect x="3" y="2" width="2" height="2"/><rect x="3" y="5" width="2" height="2"/><rect x="6" y="0" width="2" height="2"/><rect x="9" y="0" width="2" height="2"/><rect x="6" y="3" width="5" height="2"/><rect x="12" y="2" width="2" height="2"/><rect x="12" y="5" width="2" height="2"/><rect x="15" y="4" width="2" height="2"/><rect x="9" y="6" width="2" height="2"/><rect x="6" y="6" width="2" height="2"/></g></svg>
<svg style="left:1029px;top:668px;" width="15" height="13" viewBox="0 0 15 13"><path d="M0 2H6L7 3.5H14V12H0Z" fill="#767676"/></svg>
<div class="t" style="left:1036.5px;top:765px;width:0;height:0;"><div class="t" style="left:-30px;top:-9px;width:60px;height:18px;line-height:18px;text-align:center;font-size:12.5px;color:#ececec;transform:rotate(-90deg);letter-spacing:-0.1px;">EQ-5</div></div>
<svg style="left:1028px;top:836px;" width="18" height="14" viewBox="0 0 18 14"><rect x="1" y="1" width="15" height="12" rx="2.5" fill="none" stroke="#e8e8e8" stroke-width="1.5"/><path d="M1 4.5H16" stroke="#e8e8e8" stroke-width="1.5"/></svg>
<svg style="left:1030px;top:863px;" width="15" height="9" viewBox="0 0 15 9"><g fill="#c0c0c0"><rect x="0" y="0" width="3.2" height="3"/><rect x="5" y="0" width="3.2" height="3"/><rect x="10" y="0" width="3.2" height="3"/><rect x="0" y="5" width="3.2" height="3"/><rect x="5" y="5" width="3.2" height="3"/><rect x="10" y="5" width="3.2" height="3"/></g></svg>
<svg style="left:1029px;top:883px;" width="16" height="8" viewBox="0 0 16 8"><circle cx="3" cy="4" r="2" fill="none" stroke="#d0d0d0" stroke-width="1.2"/><path d="M5 4H14M11.5 1.5L14 4L11.5 6.5" fill="none" stroke="#d0d0d0" stroke-width="1.2"/></svg>
<div style="left:1058px;top:632px;width:426px;height:156px;background:#0e0e0e;"></div>
<svg style="left:1058px;top:632px;" width="426" height="156" viewBox="0 0 426 156"><path d="M8.5 0V156" stroke="#2b2b2b" stroke-width="1"/><path d="M32.5 0V156" stroke="#2b2b2b" stroke-width="1"/><path d="M50.5 0V156" stroke="#2b2b2b" stroke-width="1"/><path d="M63.5 0V156" stroke="#2b2b2b" stroke-width="1"/><path d="M74.5 0V156" stroke="#2b2b2b" stroke-width="1"/><path d="M83.5 0V156" stroke="#2b2b2b" stroke-width="1"/><path d="M91.5 0V156" stroke="#2b2b2b" stroke-width="1"/><path d="M98.5 0V156" stroke="#2b2b2b" stroke-width="1"/><path d="M104.5 0V156" stroke="#2b2b2b" stroke-width="1"/><path d="M146.5 0V156" stroke="#2b2b2b" stroke-width="1"/><path d="M170.5 0V156" stroke="#2b2b2b" stroke-width="1"/><path d="M187.5 0V156" stroke="#2b2b2b" stroke-width="1"/><path d="M200.5 0V156" stroke="#2b2b2b" stroke-width="1"/><path d="M211.5 0V156" stroke="#2b2b2b" stroke-width="1"/><path d="M221.5 0V156" stroke="#2b2b2b" stroke-width="1"/><path d="M228.5 0V156" stroke="#2b2b2b" stroke-width="1"/><path d="M236.5 0V156" stroke="#2b2b2b" stroke-width="1"/><path d="M242.5 0V156" stroke="#2b2b2b" stroke-width="1"/><path d="M283.5 0V156" stroke="#2b2b2b" stroke-width="1"/><path d="M307.5 0V156" stroke="#2b2b2b" stroke-width="1"/><path d="M325.5 0V156" stroke="#2b2b2b" stroke-width="1"/><path d="M338.5 0V156" stroke="#2b2b2b" stroke-width="1"/><path d="M349.5 0V156" stroke="#2b2b2b" stroke-width="1"/><path d="M358.5 0V156" stroke="#2b2b2b" stroke-width="1"/><path d="M366.5 0V156" stroke="#2b2b2b" stroke-width="1"/><path d="M373.5 0V156" stroke="#2b2b2b" stroke-width="1"/><path d="M379.5 0V156" stroke="#2b2b2b" stroke-width="1"/><path d="M421.5 0V156" stroke="#2b2b2b" stroke-width="1"/><path d="M0 20.5H426" stroke="#2b2b2b" stroke-width="1"/><path d="M0 49.5H426" stroke="#2b2b2b" stroke-width="1"/><path d="M0 78.5H426" stroke="#2b2b2b" stroke-width="1"/><path d="M0 108.5H426" stroke="#2b2b2b" stroke-width="1"/><path d="M0 137.5H426" stroke="#2b2b2b" stroke-width="1"/><path d="M0.0 30.5C3.7 30.2 15.0 29.5 22.0 29.0C29.0 28.5 35.3 28.1 42.0 27.8C48.7 27.5 56.7 27.1 62.0 27.2C67.3 27.3 70.2 27.8 74.0 28.5C77.8 29.2 80.7 30.1 84.5 31.7C88.3 33.3 93.1 35.7 97.0 38.0C100.9 40.3 103.8 42.3 108.0 45.5C112.2 48.7 118.0 54.2 122.0 57.0C126.0 59.8 129.1 60.8 132.0 62.0C134.9 63.2 137.0 63.6 139.5 64.0C142.0 64.4 144.5 64.3 147.0 64.2C149.5 64.1 152.0 63.5 154.5 63.2C157.0 62.9 159.8 62.4 162.0 62.3C164.2 62.1 165.8 61.9 168.0 62.3C170.2 62.7 172.7 63.5 175.0 64.5C177.3 65.5 178.3 65.8 182.0 68.5C185.7 71.2 192.0 76.1 197.0 80.5C202.0 84.9 207.8 91.2 212.0 95.0C216.2 98.8 219.2 101.3 222.0 103.5C224.8 105.7 226.8 107.0 229.0 108.0C231.2 109.0 233.0 109.6 235.0 109.8C237.0 110.0 239.0 109.5 241.0 109.0C243.0 108.5 243.5 109.0 247.0 106.8C250.5 104.5 256.2 100.1 262.0 95.5C267.8 90.9 276.3 83.6 282.0 79.0C287.7 74.4 291.8 71.3 296.0 68.0C300.2 64.7 303.5 61.8 307.0 59.0C310.5 56.2 314.1 53.5 317.0 51.5C319.9 49.5 322.2 48.0 324.5 46.8C326.8 45.5 328.9 44.6 331.0 44.0C333.1 43.4 335.2 43.1 337.0 43.0C338.8 42.9 340.3 43.2 342.0 43.6C343.7 44.0 344.5 44.3 347.0 45.5C349.5 46.7 352.8 48.5 357.0 51.0C361.2 53.5 367.5 57.8 372.0 60.5C376.5 63.2 379.8 64.9 384.0 67.0C388.2 69.1 392.3 71.3 397.0 73.0C401.7 74.7 407.2 76.1 412.0 77.2C416.8 78.3 423.7 79.3 426.0 79.7" fill="none" stroke="#f08a2e" stroke-width="1.5"/><circle cx="108.0" cy="31.5" r="7.2" fill="#f5d535"/><text x="108.0" y="35.3" text-anchor="middle" font-family="Liberation Sans, sans-serif" font-weight="bold" font-size="10.5" fill="#222">1</text><circle cx="168.0" cy="50.5" r="7.2" fill="#f5d535"/><text x="168.0" y="54.3" text-anchor="middle" font-family="Liberation Sans, sans-serif" font-weight="bold" font-size="10.5" fill="#222">2</text><circle cx="233.5" cy="119.0" r="7.2" fill="#f5d535"/><text x="233.5" y="122.8" text-anchor="middle" font-family="Liberation Sans, sans-serif" font-weight="bold" font-size="10.5" fill="#222">3</text><circle cx="331.5" cy="40.5" r="7.2" fill="#f5d535"/><text x="331.5" y="44.3" text-anchor="middle" font-family="Liberation Sans, sans-serif" font-weight="bold" font-size="10.5" fill="#222">4</text><circle cx="382.5" cy="83.5" r="7.2" fill="#f5d535"/><text x="382.5" y="87.3" text-anchor="middle" font-family="Liberation Sans, sans-serif" font-weight="bold" font-size="10.5" fill="#222">5</text><text x="12.0" y="18.0" font-family="Liberation Sans, sans-serif" font-size="11" fill="#777782">20</text><text x="108.0" y="18.0" font-family="Liberation Sans, sans-serif" font-size="11" fill="#777782">100</text><text x="244.0" y="18.0" font-family="Liberation Sans, sans-serif" font-size="11" fill="#777782">1k</text><text x="381.0" y="18.0" font-family="Liberation Sans, sans-serif" font-size="11" fill="#777782">10k</text><text x="418.0" y="24.0" text-anchor="end" font-family="Liberation Sans, sans-serif" font-size="11" fill="#777782">+20</text><text x="418.0" y="53.4" text-anchor="end" font-family="Liberation Sans, sans-serif" font-size="11" fill="#777782">+10</text><text x="418.0" y="112.2" text-anchor="end" font-family="Liberation Sans, sans-serif" font-size="11" fill="#777782">-10</text><text x="418.0" y="141.6" text-anchor="end" font-family="Liberation Sans, sans-serif" font-size="11" fill="#777782">-20</text></svg>
<div class="t" style="left:1499.50px;top:636.62px;font-size:10.5px;line-height:13px;color:#ececec;font-weight:bold;transform:scaleX(0.9249);transform-origin:0 50%;">GLOBAL</div>
<svg style="left:1495.6px;top:650.1px;" width="48.8" height="48.8" viewBox="0 0 48.8 48.8"><path d="M12.51 38.57 A18.5 18.5 0 1 1 36.29 38.57" fill="none" stroke="#545454" stroke-width="5.8"/><path d="M10.64 40.79 A21.4 21.4 0 1 1 38.16 40.79" fill="none" stroke="#727272" stroke-width="1.5"/><path d="M10.64 40.79 A21.4 21.4 0 1 1 38.16 40.79" fill="none" stroke="#f58220" stroke-width="2.6"/><circle cx="24.4" cy="24.4" r="15.6" fill="#2e2e2e"/><circle cx="24.4" cy="24.4" r="14.6" fill="#6e6e6e"/><path d="M9.95 22.32 A14.6 14.6 0 0 1 38.85 22.32 Z" fill="#8c8c8c"/><line x1="26.91" y1="27.39" x2="33.42" y2="35.16" stroke="#ffffff" stroke-width="3"/></svg>
<div class="t" style="left:1495.00px;top:694.17px;font-size:15px;line-height:18px;color:#ececec;transform:scaleX(0.9672);transform-origin:0 50%;">Amount</div>
<svg style="left:1495.6px;top:725.1px;" width="48.8" height="48.8" viewBox="0 0 48.8 48.8"><path d="M12.51 38.57 A18.5 18.5 0 1 1 36.29 38.57" fill="none" stroke="#545454" stroke-width="5.8"/><path d="M10.64 40.79 A21.4 21.4 0 1 1 38.16 40.79" fill="none" stroke="#727272" stroke-width="1.5"/><circle cx="24.4" cy="3" r="1.7" fill="#f58220"/><circle cx="24.4" cy="24.4" r="15.6" fill="#2e2e2e"/><circle cx="24.4" cy="24.4" r="14.6" fill="#6e6e6e"/><path d="M9.95 22.32 A14.6 14.6 0 0 1 38.85 22.32 Z" fill="#8c8c8c"/><line x1="24.40" y1="20.50" x2="24.40" y2="10.36" stroke="#ffffff" stroke-width="3"/></svg>
<div class="t" style="left:1506.00px;top:769.17px;font-size:15px;line-height:18px;color:#ececec;transform:scaleX(0.9329);transform-origin:0 50%;">Shift</div>
<div style="left:1493px;top:797px;width:55.5px;height:20.5px;border:1px solid #2a2a2a;border-radius:2px;background:linear-gradient(#777 0 42%,#626262 42%);"></div>
<div class="t" style="left:1498.00px;top:798.17px;font-size:15px;line-height:18px;color:#ececec;transform:scaleX(0.9329);transform-origin:0 50%;">Post</div>
<svg style="left:1537px;top:804.5px;" width="8" height="5" viewBox="0 0 8 5"><path d="M0.5 0H6.5L3.5 3.8Z" fill="#fff"/></svg>
<svg style="left:1496.6px;top:830.1px;" width="48.8" height="48.8" viewBox="0 0 48.8 48.8"><path d="M12.51 38.57 A18.5 18.5 0 1 1 36.29 38.57" fill="none" stroke="#545454" stroke-width="5.8"/><path d="M10.64 40.79 A21.4 21.4 0 1 1 38.16 40.79" fill="none" stroke="#727272" stroke-width="1.5"/><circle cx="24.4" cy="3" r="1.7" fill="#f58220"/><circle cx="24.4" cy="24.4" r="15.6" fill="#2e2e2e"/><circle cx="24.4" cy="24.4" r="14.6" fill="#6e6e6e"/><path d="M9.95 22.32 A14.6 14.6 0 0 1 38.85 22.32 Z" fill="#8c8c8c"/><line x1="24.40" y1="20.50" x2="24.40" y2="10.36" stroke="#ffffff" stroke-width="3"/></svg>
<div class="t" style="left:1498.00px;top:874.17px;font-size:15px;line-height:18px;color:#ececec;letter-spacing:-0.172px;">Output</div>
<svg style="left:1564.5px;top:758.5px;" width="13" height="13" viewBox="0 0 13 13"><path d="M4.7 0.5H8.3V4.7H12.5V8.3H8.3V12.5H4.7V8.3H0.5V4.7H4.7Z" fill="#c4c4c4"/></svg>
<div style="left:1088.1px;top:797px;width:25.6px;height:20.5px;background:#f58220;border:1px solid #2a2a2a;border-radius:2px;"></div>
<div class="t" style="left:1096.53px;top:798.47px;font-size:15px;line-height:18px;color:#111;">1</div>
<div style="left:1117.5px;top:797px;width:41px;height:20.5px;border:1px solid #2a2a2a;border-radius:2px;background:linear-gradient(#777 0 42%,#626262 42%);"></div>
<svg style="left:1121px;top:798px;" width="20" height="19" viewBox="0 0 20 19"><g transform="translate(1.5,9.8) scale(1.15)"><path d="M1 -2.5C4 -2.5 5 0 7 0H14M1 2.5C4 2.5 5 0 7 0" fill="none" stroke="#fff" stroke-width="1.15"/></g></svg>
<svg style="left:1146.5px;top:804.5px;" width="8" height="5" viewBox="0 0 8 5"><path d="M0.5 0H6.5L3.5 3.8Z" fill="#fff"/></svg>
<div style="left:1088.2px;top:822px;width:70.4px;height:21px;background:#0e0e0e;border-radius:2px;"></div>
<div class="t" style="left:1097.75px;top:824.66px;font-size:14px;line-height:17px;color:#f58220;transform:scaleX(0.9700);transform-origin:0 50%;-webkit-text-stroke:0.5px #f58220;">+15.7 dB</div>
<div style="left:1089.5px;top:824.5px;width:4px;height:16px;background:#3e3e3e;"></div>
<div style="left:1089.5px;top:828.02px;width:4px;height:5.28px;background:#f58220;"></div>
<div style="left:1088.2px;top:847px;width:70.4px;height:21px;background:#0e0e0e;border-radius:2px;"></div>
<div class="t" style="left:1109.47px;top:849.66px;font-size:14px;line-height:17px;color:#f58220;transform:scaleX(0.9700);transform-origin:0 50%;-webkit-text-stroke:0.5px #f58220;">107 Hz</div>
<div style="left:1089.5px;top:849.5px;width:4px;height:16px;background:#3e3e3e;"></div>
<div style="left:1089.5px;top:861.98px;width:4px;height:3.52px;background:#f58220;"></div>
<div style="left:1088.2px;top:872px;width:70.4px;height:21px;background:#2f2f2f;border-radius:2px;"></div>
<div class="t" style="left:1126.07px;top:874.66px;font-size:14px;line-height:17px;color:#9a6a30;transform:scaleX(0.9700);transform-origin:0 50%;-webkit-text-stroke:0.5px #9a6a30;">0.71</div>
<div style="left:1089.5px;top:874.5px;width:4px;height:16px;background:#3e3e3e;"></div>
<div style="left:1089.5px;top:885.5px;width:4px;height:5px;background:#9a6a30;"></div>
<div style="left:1168.1px;top:797px;width:25.6px;height:20.5px;background:#f58220;border:1px solid #2a2a2a;border-radius:2px;"></div>
<div class="t" style="left:1176.53px;top:798.47px;font-size:15px;line-height:18px;color:#111;">2</div>
<div style="left:1197.5px;top:797px;width:41px;height:20.5px;border:1px solid #2a2a2a;border-radius:2px;background:linear-gradient(#777 0 42%,#626262 42%);"></div>
<svg style="left:1201px;top:798px;" width="20" height="19" viewBox="0 0 20 19"><g transform="translate(1.5,9.8) scale(1.15)"><path d="M0 0H3L7 -3.5L11 0H14M3 0L7 3.5L11 0" fill="none" stroke="#fff" stroke-width="1.15"/></g></svg>
<svg style="left:1226.5px;top:804.5px;" width="8" height="5" viewBox="0 0 8 5"><path d="M0.5 0H6.5L3.5 3.8Z" fill="#fff"/></svg>
<div style="left:1168.2px;top:822px;width:70.4px;height:21px;background:#0e0e0e;border-radius:2px;"></div>
<div class="t" style="left:1185.31px;top:824.66px;font-size:14px;line-height:17px;color:#f58220;transform:scaleX(0.9700);transform-origin:0 50%;-webkit-text-stroke:0.5px #f58220;">+9.2 dB</div>
<div style="left:1169.5px;top:824.5px;width:4px;height:16px;background:#3e3e3e;"></div>
<div style="left:1169.5px;top:829.94px;width:4px;height:3.36px;background:#f58220;"></div>
<div style="left:1168.2px;top:847px;width:70.4px;height:21px;background:#0e0e0e;border-radius:2px;"></div>
<div class="t" style="left:1189.47px;top:849.66px;font-size:14px;line-height:17px;color:#f58220;transform:scaleX(0.9700);transform-origin:0 50%;-webkit-text-stroke:0.5px #f58220;">294 Hz</div>
<div style="left:1169.5px;top:849.5px;width:4px;height:16px;background:#3e3e3e;"></div>
<div style="left:1169.5px;top:859.74px;width:4px;height:5.76px;background:#f58220;"></div>
<div style="left:1168.2px;top:872px;width:70.4px;height:21px;background:#0e0e0e;border-radius:2px;"></div>
<div class="t" style="left:1206.07px;top:874.66px;font-size:14px;line-height:17px;color:#f58220;transform:scaleX(0.9700);transform-origin:0 50%;-webkit-text-stroke:0.5px #f58220;">0.71</div>
<div style="left:1169.5px;top:874.5px;width:4px;height:16px;background:#3e3e3e;"></div>
<div style="left:1169.5px;top:885.5px;width:4px;height:5px;background:#f58220;"></div>
<div style="left:1248.1px;top:797px;width:25.6px;height:20.5px;background:#f58220;border:1px solid #2a2a2a;border-radius:2px;"></div>
<div class="t" style="left:1256.53px;top:798.47px;font-size:15px;line-height:18px;color:#111;">3</div>
<div style="left:1277.5px;top:797px;width:41px;height:20.5px;border:1px solid #2a2a2a;border-radius:2px;background:linear-gradient(#777 0 42%,#626262 42%);"></div>
<svg style="left:1281px;top:798px;" width="20" height="19" viewBox="0 0 20 19"><g transform="translate(1.5,9.8) scale(1.15)"><path d="M0 0H3L7 -3.5L11 0H14M3 0L7 3.5L11 0" fill="none" stroke="#fff" stroke-width="1.15"/></g></svg>
<svg style="left:1306.5px;top:804.5px;" width="8" height="5" viewBox="0 0 8 5"><path d="M0.5 0H6.5L3.5 3.8Z" fill="#fff"/></svg>
<div style="left:1248.2px;top:822px;width:70.4px;height:21px;background:#0e0e0e;border-radius:2px;"></div>
<div class="t" style="left:1261.16px;top:824.66px;font-size:14px;line-height:17px;color:#f58220;transform:scaleX(0.9700);transform-origin:0 50%;-webkit-text-stroke:0.5px #f58220;">-13.8 dB</div>
<div style="left:1249.5px;top:824.5px;width:4px;height:16px;background:#3e3e3e;"></div>
<div style="left:1249.5px;top:832.5px;width:4px;height:3.52px;background:#f58220;"></div>
<div style="left:1248.2px;top:847px;width:70.4px;height:21px;background:#0e0e0e;border-radius:2px;"></div>
<div class="t" style="left:1269.47px;top:849.66px;font-size:14px;line-height:17px;color:#f58220;transform:scaleX(0.9700);transform-origin:0 50%;-webkit-text-stroke:0.5px #f58220;">884 Hz</div>
<div style="left:1249.5px;top:849.5px;width:4px;height:16px;background:#3e3e3e;"></div>
<div style="left:1249.5px;top:857.18px;width:4px;height:8.32px;background:#f58220;"></div>
<div style="left:1248.2px;top:872px;width:70.4px;height:21px;background:#0e0e0e;border-radius:2px;"></div>
<div class="t" style="left:1286.07px;top:874.66px;font-size:14px;line-height:17px;color:#f58220;transform:scaleX(0.9700);transform-origin:0 50%;-webkit-text-stroke:0.5px #f58220;">0.71</div>
<div style="left:1249.5px;top:874.5px;width:4px;height:16px;background:#3e3e3e;"></div>
<div style="left:1249.5px;top:885.5px;width:4px;height:5px;background:#f58220;"></div>
<div style="left:1328.1px;top:797px;width:25.6px;height:20.5px;background:#f58220;border:1px solid #2a2a2a;border-radius:2px;"></div>
<div class="t" style="left:1336.53px;top:798.47px;font-size:15px;line-height:18px;color:#111;">4</div>
<div style="left:1357.5px;top:797px;width:41px;height:20.5px;border:1px solid #2a2a2a;border-radius:2px;background:linear-gradient(#777 0 42%,#626262 42%);"></div>
<svg style="left:1361px;top:798px;" width="20" height="19" viewBox="0 0 20 19"><g transform="translate(1.5,9.8) scale(1.15)"><path d="M0 0H3L7 -3.5L11 0H14M3 0L7 3.5L11 0" fill="none" stroke="#fff" stroke-width="1.15"/></g></svg>
<svg style="left:1386.5px;top:804.5px;" width="8" height="5" viewBox="0 0 8 5"><path d="M0.5 0H6.5L3.5 3.8Z" fill="#fff"/></svg>
<div style="left:1328.2px;top:822px;width:70.4px;height:21px;background:#0e0e0e;border-radius:2px;"></div>
<div class="t" style="left:1337.75px;top:824.66px;font-size:14px;line-height:17px;color:#f58220;transform:scaleX(0.9700);transform-origin:0 50%;-webkit-text-stroke:0.5px #f58220;">+12.6 dB</div>
<div style="left:1329.5px;top:824.5px;width:4px;height:16px;background:#3e3e3e;"></div>
<div style="left:1329.5px;top:828.98px;width:4px;height:4.32px;background:#f58220;"></div>
<div style="left:1328.2px;top:847px;width:70.4px;height:21px;background:#0e0e0e;border-radius:2px;"></div>
<div class="t" style="left:1338.91px;top:849.66px;font-size:14px;line-height:17px;color:#f58220;transform:scaleX(0.9700);transform-origin:0 50%;-webkit-text-stroke:0.5px #f58220;">4.60 kHz</div>
<div style="left:1329.5px;top:849.5px;width:4px;height:16px;background:#3e3e3e;"></div>
<div style="left:1329.5px;top:853.02px;width:4px;height:12.48px;background:#f58220;"></div>
<div style="left:1328.2px;top:872px;width:70.4px;height:21px;background:#0e0e0e;border-radius:2px;"></div>
<div class="t" style="left:1366.07px;top:874.66px;font-size:14px;line-height:17px;color:#f58220;transform:scaleX(0.9700);transform-origin:0 50%;-webkit-text-stroke:0.5px #f58220;">0.71</div>
<div style="left:1329.5px;top:874.5px;width:4px;height:16px;background:#3e3e3e;"></div>
<div style="left:1329.5px;top:885.5px;width:4px;height:5px;background:#f58220;"></div>
<div style="left:1408.1px;top:797px;width:25.6px;height:20.5px;background:#f58220;border:1px solid #2a2a2a;border-radius:2px;"></div>
<div class="t" style="left:1416.53px;top:798.47px;font-size:15px;line-height:18px;color:#111;">5</div>
<div style="left:1437.5px;top:797px;width:41px;height:20.5px;border:1px solid #2a2a2a;border-radius:2px;background:linear-gradient(#777 0 42%,#626262 42%);"></div>
<svg style="left:1441px;top:798px;" width="20" height="19" viewBox="0 0 20 19"><g transform="translate(1.5,9.8) scale(1.15)"><path d="M0 0H7C9 0 10 -2.5 13 -2.5M7 0C9 0 10 2.5 13 2.5" fill="none" stroke="#fff" stroke-width="1.15"/></g></svg>
<svg style="left:1466.5px;top:804.5px;" width="8" height="5" viewBox="0 0 8 5"><path d="M0.5 0H6.5L3.5 3.8Z" fill="#fff"/></svg>
<div style="left:1408.2px;top:822px;width:70.4px;height:21px;background:#0e0e0e;border-radius:2px;"></div>
<div class="t" style="left:1428.72px;top:824.66px;font-size:14px;line-height:17px;color:#f58220;transform:scaleX(0.9700);transform-origin:0 50%;-webkit-text-stroke:0.5px #f58220;">-1.8 dB</div>
<div style="left:1409.5px;top:824.5px;width:4px;height:16px;background:#3e3e3e;"></div>
<div style="left:1409.5px;top:832.5px;width:4px;height:0.48px;background:#f58220;"></div>
<div style="left:1408.2px;top:847px;width:70.4px;height:21px;background:#0e0e0e;border-radius:2px;"></div>
<div class="t" style="left:1418.91px;top:849.66px;font-size:14px;line-height:17px;color:#f58220;transform:scaleX(0.9700);transform-origin:0 50%;-webkit-text-stroke:0.5px #f58220;">10.8 kHz</div>
<div style="left:1409.5px;top:849.5px;width:4px;height:16px;background:#3e3e3e;"></div>
<div style="left:1409.5px;top:851.1px;width:4px;height:14.4px;background:#f58220;"></div>
<div style="left:1408.2px;top:872px;width:70.4px;height:21px;background:#2f2f2f;border-radius:2px;"></div>
<div class="t" style="left:1446.07px;top:874.66px;font-size:14px;line-height:17px;color:#9a6a30;transform:scaleX(0.9700);transform-origin:0 50%;-webkit-text-stroke:0.5px #9a6a30;">0.71</div>
<div style="left:1409.5px;top:874.5px;width:4px;height:16px;background:#3e3e3e;"></div>
<div style="left:1409.5px;top:885.5px;width:4px;height:5px;background:#9a6a30;"></div>
<svg style="left:1068px;top:824px;" width="12" height="18" viewBox="0 0 12 18"><path d="M5.5 3V15" stroke="#f0f0f0" stroke-width="1.5"/><path d="M5.5 0.8L8.5 5H2.5Z M5.5 16.2L8.5 12H2.5Z" fill="#f0f0f0"/></svg>
<svg style="left:1063px;top:851px;" width="22" height="13" viewBox="0 0 22 13"><rect x="1" y="1" width="19" height="11" rx="3.5" fill="#fff"/><path d="M4 6.5H17M7 3.5L4 6.5L7 9.5M14 3.5L17 6.5L14 9.5" fill="none" stroke="#2d2d2d" stroke-width="1.5"/></svg>
<svg style="left:1066px;top:876px;" width="16" height="14" viewBox="0 0 16 14"><defs><linearGradient id="bg2" x1="0" y1="0" x2="0" y2="1"><stop offset="0" stop-color="#fff"/><stop offset="1" stop-color="#9a9a9a"/></linearGradient></defs><path d="M0 13.5C4.5 12.5 6.3 9 8 0.5C9.7 9 11.5 12.5 16 13.5Z" fill="url(#bg2)"/></svg>
<div style="left:381px;top:910.5px;width:1240px;height:3px;background:#6a6a6a;"></div>
<div class="t" style="left:1639.00px;top:57.66px;font-size:14px;line-height:17px;color:#ececec;font-weight:bold;transform:scaleX(0.9309);transform-origin:0 50%;">Browser - Devices</div>
<svg style="left:1642px;top:83px;" width="20" height="19" viewBox="0 0 20 19"><rect x="2" y="2.5" width="16" height="13.5" rx="3.5" fill="none" stroke="#f58220" stroke-width="3"/></svg>
<svg style="left:1679px;top:82px;" width="21" height="21" viewBox="0 0 21 21"><circle cx="10.5" cy="10.5" r="8.6" fill="none" stroke="#f0f0f0" stroke-width="1.5"/><path d="M9.3 8V13L5 10.5Z M11.7 8V13L16 10.5Z" fill="#f0f0f0"/></svg>
<svg style="left:1718px;top:84px;" width="20" height="17" viewBox="0 0 20 17"><path d="M1 8.5H4M4.5 1V16M6.5 3V14M8.5 5V12M10.5 6.5V10.5M12.5 7.5V9.5M14 8.5H18" fill="none" stroke="#e8e8e8" stroke-width="1.3"/></svg>
<svg style="left:1758px;top:85px;" width="16" height="15" viewBox="0 0 16 15"><g fill="#f0f0f0"><rect x="0.5" y="0" width="4.2" height="14"/><rect x="5.3" y="0" width="4.2" height="14"/><rect x="10.1" y="0" width="4.2" height="14"/></g><g fill="#4c4c4c"><rect x="3.3" y="0" width="3.2" height="8.5"/><rect x="8.3" y="0" width="3.2" height="8.5"/></g></svg>
<svg style="left:1794px;top:83px;" width="19" height="19" viewBox="0 0 19 19"><circle cx="9.5" cy="9.5" r="8.3" fill="#f2f2f2"/><path d="M9.5 9.5L4.6 3.6A7.6 7.6 0 0 1 14.4 3.6Z M9.5 9.5L14.4 15.4A7.6 7.6 0 0 1 4.6 15.4Z" fill="#a8a8a8"/><circle cx="9.5" cy="9.5" r="3.4" fill="#f2f2f2"/><circle cx="9.5" cy="9.5" r="1.7" fill="#3a3a3a"/></svg>
<svg style="left:1833px;top:85px;" width="19" height="15" viewBox="0 0 19 15"><path d="M1 14V8L7 1H18V14Z" fill="#c8c8c8"/><path d="M1 9H18" stroke="#4d4d4d" stroke-width="1.2"/><path d="M7 1.5V8" stroke="#4d4d4d" stroke-width="0"/></svg>
<svg style="left:1872px;top:85px;" width="19" height="15" viewBox="0 0 19 15"><rect x="1" y="1" width="16.5" height="10" fill="#c8c8c8"/><rect x="3" y="3" width="12.5" height="4" fill="#e8e8e8"/><rect x="8" y="11" width="2.5" height="2" fill="#c8c8c8"/><rect x="4.5" y="13" width="9.5" height="1.6" fill="#c8c8c8"/></svg>
<div style="left:1634px;top:110px;width:264px;height:31px;background:#0e0e0e;border-radius:3px;"></div>
<svg style="left:1641px;top:119px;" width="20" height="14" viewBox="0 0 20 14"><circle cx="5.8" cy="5.6" r="3.9" fill="none" stroke="#f0f0f0" stroke-width="1.7"/><path d="M8.6 8.6L12 12.3" stroke="#f0f0f0" stroke-width="2.2"/><path d="M13 7.8H19L16 11.6Z" fill="#f0f0f0"/></svg>
<svg style="left:1874px;top:120px;" width="12" height="12" viewBox="0 0 12 12"><path d="M1.5 1.5L10.5 10.5M10.5 1.5L1.5 10.5" stroke="#f0f0f0" stroke-width="1.5"/></svg>
<div style="left:1634px;top:146px;width:264px;height:20.5px;background:#4c4c4c;border:1px solid #2c2c2c;"></div>
<div style="left:1643.5px;top:152.5px;width:9.5px;height:1.4px;background:#e8e8e8;"></div>
<div style="left:1643.5px;top:155.5px;width:9.5px;height:1.4px;background:#e8e8e8;"></div>
<div style="left:1643.5px;top:158.5px;width:9.5px;height:1.4px;background:#e8e8e8;"></div>
<div class="t" style="left:1660.00px;top:147.47px;font-size:15px;line-height:18px;color:#ececec;transform:scaleX(0.9564);transform-origin:0 50%;">Collection</div>
<div style="left:1634px;top:166px;width:264px;height:20.5px;background:#4c4c4c;border:1px solid #2c2c2c;"></div>
<div style="left:1643.5px;top:172.5px;width:9.5px;height:1.4px;background:#e8e8e8;"></div>
<div style="left:1643.5px;top:175.5px;width:9.5px;height:1.4px;background:#e8e8e8;"></div>
<div style="left:1643.5px;top:178.5px;width:9.5px;height:1.4px;background:#e8e8e8;"></div>
<div class="t" style="left:1660.00px;top:167.47px;font-size:15px;line-height:18px;color:#ececec;font-weight:bold;transform:scaleX(0.8960);transform-origin:0 50%;">Location</div>
<div style="left:1634px;top:186.5px;width:264px;height:244px;background:#0e0e0e;"></div>
<div style="left:1636px;top:188px;width:251px;height:24.5px;background:#4c4c4c;"></div>
<div style="left:1887px;top:188px;width:6px;height:24.5px;background:#2c2c2c;"></div>
<div style="left:1893.5px;top:188px;width:1.5px;height:18px;background:#8a8a8a;"></div>
<div style="left:1893.5px;top:213px;width:1.5px;height:217px;background:#3a3a3a;"></div>
<svg style="left:1641px;top:192px;" width="17" height="17" viewBox="0 0 17 17"><circle cx="8.5" cy="8.5" r="6" fill="none" stroke="#a0a0a0" stroke-width="2.2"/></svg>
<div class="t" style="left:1666.00px;top:192.47px;font-size:15px;line-height:18px;color:#ececec;transform:scaleX(0.9218);transform-origin:0 50%;">All Device Locations</div>
<div class="t" style="left:1872.04px;top:195.62px;font-size:10px;line-height:12px;color:#8a8a8a;">99+</div>
<div style="left:1659px;top:215.5px;width:18.5px;height:18.5px;background:#dc2848;border-radius:50%;"></div>
<svg style="left:1662px;top:221px;" width="13" height="8" viewBox="0 0 13 8"><g fill="#fff"><rect x="0" y="3" width="1.6" height="1.6"/><rect x="2.2" y="1.5" width="1.6" height="1.6"/><rect x="2.2" y="4" width="1.6" height="1.6"/><rect x="4.4" y="0" width="1.6" height="1.6"/><rect x="6.6" y="0" width="1.6" height="1.6"/><rect x="4.4" y="2.5" width="3.8" height="1.6"/><rect x="4.4" y="5" width="1.6" height="1.6"/><rect x="6.6" y="5" width="1.6" height="1.6"/><rect x="8.8" y="1.5" width="1.6" height="1.6"/><rect x="8.8" y="4" width="1.6" height="1.6"/><rect x="11" y="3" width="1.6" height="1.6"/></g></svg>
<div class="t" style="left:1684.00px;top:217.67px;font-size:15px;line-height:18px;color:#ececec;letter-spacing:-0.002px;">Bitwig</div>
<div class="t" style="left:1876.32px;top:219.62px;font-size:10.5px;line-height:13px;color:#8a8a8a;">82</div>
<svg style="left:1641px;top:246px;" width="9" height="9" viewBox="0 0 9 9"><path d="M8 0.5V8H0.5Z" fill="#f0f0f0"/></svg>
<div style="left:1658.5px;top:242px;width:19px;height:17px;background:#b8c088;border:1px solid #6a7048;"></div>
<svg style="left:1659px;top:243px;" width="18" height="15" viewBox="0 0 18 15"><path d="M2 7.5H5M5 5H9.5C11 5 11 10 9.5 10H5Z" fill="#b45a28" stroke="#b45a28" stroke-width="1"/><g fill="#7a9050"><rect x="12" y="2" width="5" height="2.2"/><rect x="12" y="6" width="5" height="2.2"/><rect x="12" y="10" width="5" height="2.2"/></g></svg>
<div class="t" style="left:1684.00px;top:242.67px;font-size:15px;line-height:18px;color:#ececec;transform:scaleX(0.8289);transform-origin:0 50%;">!!! VST</div>
<div class="t" style="left:1876.32px;top:244.62px;font-size:10.5px;line-height:13px;color:#8a8a8a;">60</div>
<div style="left:1634px;top:263px;width:262px;height:167.5px;overflow:hidden;">
<svg style="left:33px;top:4.8px;" width="21" height="17" viewBox="0 0 21 17"><path d="M0.5 1.5H8L9.5 3.5H20V16H0.5Z" fill="#d2d2d2"/><path d="M0.5 12H20V16H0.5Z" fill="#b0b0b0"/><path d="M0.5 1.5H8L9 3H0.5Z" fill="#a8a8a8"/></svg>
<div class="t" style="left:59.00px;top:4.47px;font-size:15px;line-height:18px;color:#ececec;transform:scaleX(0.8538);transform-origin:0 50%;">808 BASS MODULE III v3....</div>
<div class="t" style="left:248.16px;top:6.92px;font-size:10.5px;line-height:13px;color:#8a8a8a;">1</div>
<svg style="left:33px;top:29.8px;" width="21" height="17" viewBox="0 0 21 17"><path d="M0.5 1.5H8L9.5 3.5H20V16H0.5Z" fill="#d2d2d2"/><path d="M0.5 12H20V16H0.5Z" fill="#b0b0b0"/><path d="M0.5 1.5H8L9 3H0.5Z" fill="#a8a8a8"/></svg>
<div class="t" style="left:59.00px;top:29.47px;font-size:15px;line-height:18px;color:#ececec;transform:scaleX(0.9593);transform-origin:0 50%;">Audified</div>
<div class="t" style="left:248.16px;top:31.92px;font-size:10.5px;line-height:13px;color:#8a8a8a;">1</div>
<svg style="left:33px;top:54.8px;" width="21" height="17" viewBox="0 0 21 17"><path d="M0.5 1.5H8L9.5 3.5H20V16H0.5Z" fill="#d2d2d2"/><path d="M0.5 12H20V16H0.5Z" fill="#b0b0b0"/><path d="M0.5 1.5H8L9 3H0.5Z" fill="#a8a8a8"/></svg>
<div class="t" style="left:59.00px;top:54.47px;font-size:15px;line-height:18px;color:#ececec;transform:scaleX(0.9173);transform-origin:0 50%;">Avenger</div>
<div class="t" style="left:248.16px;top:56.92px;font-size:10.5px;line-height:13px;color:#8a8a8a;">1</div>
<svg style="left:33px;top:79.8px;" width="21" height="17" viewBox="0 0 21 17"><path d="M0.5 1.5H8L9.5 3.5H20V16H0.5Z" fill="#d2d2d2"/><path d="M0.5 12H20V16H0.5Z" fill="#b0b0b0"/><path d="M0.5 1.5H8L9 3H0.5Z" fill="#a8a8a8"/></svg>
<svg style="left:17px;top:83.3px;" width="9" height="10" viewBox="0 0 9 10"><path d="M0.5 0.5V9.5L8 5Z" fill="#8a8a8a"/></svg>
<div class="t" style="left:59.00px;top:79.47px;font-size:15px;line-height:18px;color:#ececec;transform:scaleX(0.9047);transform-origin:0 50%;">Circle 2</div>
<div class="t" style="left:248.16px;top:81.92px;font-size:10.5px;line-height:13px;color:#8a8a8a;">1</div>
<svg style="left:33px;top:104.8px;" width="21" height="17" viewBox="0 0 21 17"><path d="M0.5 1.5H8L9.5 3.5H20V16H0.5Z" fill="#d2d2d2"/><path d="M0.5 12H20V16H0.5Z" fill="#b0b0b0"/><path d="M0.5 1.5H8L9 3H0.5Z" fill="#a8a8a8"/></svg>
<div class="t" style="left:59.00px;top:104.47px;font-size:15px;line-height:18px;color:#ececec;transform:scaleX(0.9404);transform-origin:0 50%;">Cthulhu.v1.11</div>
<div class="t" style="left:248.16px;top:106.92px;font-size:10.5px;line-height:13px;color:#8a8a8a;">1</div>
<svg style="left:33px;top:129.8px;" width="21" height="17" viewBox="0 0 21 17"><path d="M0.5 1.5H8L9.5 3.5H20V16H0.5Z" fill="#d2d2d2"/><path d="M0.5 12H20V16H0.5Z" fill="#b0b0b0"/><path d="M0.5 1.5H8L9 3H0.5Z" fill="#a8a8a8"/></svg>
<svg style="left:17px;top:133.3px;" width="9" height="10" viewBox="0 0 9 10"><path d="M0.5 0.5V9.5L8 5Z" fill="#8a8a8a"/></svg>
<div class="t" style="left:59.00px;top:129.47px;font-size:15px;line-height:18px;color:#ececec;transform:scaleX(0.9170);transform-origin:0 50%;">d16 Group</div>
<div class="t" style="left:243.10px;top:131.92px;font-size:10.5px;line-height:13px;color:#8a8a8a;">11</div>
<svg style="left:33px;top:154.8px;" width="21" height="17" viewBox="0 0 21 17"><path d="M0.5 1.5H8L9.5 3.5H20V16H0.5Z" fill="#d2d2d2"/><path d="M0.5 12H20V16H0.5Z" fill="#b0b0b0"/><path d="M0.5 1.5H8L9 3H0.5Z" fill="#a8a8a8"/></svg>
<div class="t" style="left:59.00px;top:154.47px;font-size:15px;line-height:18px;color:#ececec;transform:scaleX(0.9356);transform-origin:0 50%;">Kontakt 5 Portable x64</div>
<div class="t" style="left:248.16px;top:156.92px;font-size:10.5px;line-height:13px;color:#8a8a8a;">3</div>
</div>
<div style="left:1634px;top:431px;width:264px;height:20.5px;background:#4c4c4c;border:1px solid #2c2c2c;"></div>
<div style="left:1643.5px;top:437.5px;width:9.5px;height:1.4px;background:#e8e8e8;"></div>
<div style="left:1643.5px;top:440.5px;width:9.5px;height:1.4px;background:#e8e8e8;"></div>
<div style="left:1643.5px;top:443.5px;width:9.5px;height:1.4px;background:#e8e8e8;"></div>
<div class="t" style="left:1660.00px;top:432.47px;font-size:15px;line-height:18px;color:#ececec;transform:scaleX(0.9365);transform-origin:0 50%;">Category</div>
<div style="left:1634px;top:455px;width:264px;height:426px;background:#0e0e0e;"></div>
<div style="left:1894px;top:455px;width:2px;height:17px;background:#404040;"></div>
<svg style="left:1640px;top:459px;" width="22" height="21" viewBox="0 0 22 21"><rect x="1" y="1" width="17.5" height="17.5" rx="2.5" fill="none" stroke="#f0cc10" stroke-width="1.6"/><g fill="#f0cc10"><rect x="3.5" y="4" width="9" height="3"/><rect x="3.5" y="8.5" width="12" height="3"/><rect x="3.5" y="13" width="7" height="3"/></g><circle cx="16" cy="16.5" r="3" fill="#f58220"/><path d="M12 16.5H21" stroke="#f58220" stroke-width="1.4"/></svg>
<div class="t" style="left:1666.00px;top:461.47px;font-size:15px;line-height:18px;color:#ececec;transform:scaleX(0.8630);transform-origin:0 50%;">808 BM III</div>
<svg style="left:1867px;top:461.7px;" width="14" height="13" viewBox="0 0 14 13"><path d="M7 0.3L8.7 4.8L13.6 5L9.8 8L11.1 12.6L7 10L2.9 12.6L4.2 8L0.4 5L5.3 4.8Z" fill="#55451a"/></svg>
<svg style="left:1640px;top:484px;" width="23" height="22" viewBox="0 0 23 22"><rect x="1" y="1" width="17.5" height="17.5" rx="2.5" fill="none" stroke="#e85c30" stroke-width="1.5"/><path d="M3.5 15V4L5.5 12L7 6L8.5 11.5L10 8L11 10.5L12.5 9.5H16" fill="none" stroke="#e85c30" stroke-width="1.2"/><rect x="11.5" y="13" width="9.5" height="8" fill="#0e0e0e"/><path d="M13 20L14.5 14.8M15.7 20L17.2 14.8M18.4 20L19.9 14.8" stroke="#52699a" stroke-width="1.05"/></svg>
<div class="t" style="left:1666.00px;top:486.47px;font-size:15px;line-height:18px;color:#ececec;transform:scaleX(0.9109);transform-origin:0 50%;">Abbey Road Chambers Mono</div>
<svg style="left:1867px;top:486.7px;" width="14" height="13" viewBox="0 0 14 13"><path d="M7 0.3L8.7 4.8L13.6 5L9.8 8L11.1 12.6L7 10L2.9 12.6L4.2 8L0.4 5L5.3 4.8Z" fill="#55451a"/></svg>
<svg style="left:1640px;top:509px;" width="23" height="22" viewBox="0 0 23 22"><rect x="1" y="1" width="17.5" height="17.5" rx="2.5" fill="none" stroke="#e85c30" stroke-width="1.5"/><path d="M3.5 15V4L5.5 12L7 6L8.5 11.5L10 8L11 10.5L12.5 9.5H16" fill="none" stroke="#e85c30" stroke-width="1.2"/><rect x="11.5" y="13" width="9.5" height="8" fill="#0e0e0e"/><path d="M13 20L14.5 14.8M15.7 20L17.2 14.8M18.4 20L19.9 14.8" stroke="#52699a" stroke-width="1.05"/></svg>
<div class="t" style="left:1666.00px;top:511.47px;font-size:15px;line-height:18px;color:#ececec;transform:scaleX(0.9070);transform-origin:0 50%;">Abbey Road Chambers Mon...</div>
<svg style="left:1867px;top:511.7px;" width="14" height="13" viewBox="0 0 14 13"><path d="M7 0.3L8.7 4.8L13.6 5L9.8 8L11.1 12.6L7 10L2.9 12.6L4.2 8L0.4 5L5.3 4.8Z" fill="#55451a"/></svg>
<svg style="left:1640px;top:534px;" width="23" height="22" viewBox="0 0 23 22"><rect x="1" y="1" width="17.5" height="17.5" rx="2.5" fill="none" stroke="#e85c30" stroke-width="1.5"/><path d="M3.5 15V4L5.5 12L7 6L8.5 11.5L10 8L11 10.5L12.5 9.5H16" fill="none" stroke="#e85c30" stroke-width="1.2"/><rect x="11.5" y="13" width="9.5" height="8" fill="#0e0e0e"/><path d="M13 20L14.5 14.8M15.7 20L17.2 14.8M18.4 20L19.9 14.8" stroke="#52699a" stroke-width="1.05"/></svg>
<div class="t" style="left:1666.00px;top:536.47px;font-size:15px;line-height:18px;color:#ececec;transform:scaleX(0.9105);transform-origin:0 50%;">Abbey Road Chambers Stereo</div>
<svg style="left:1867px;top:536.7px;" width="14" height="13" viewBox="0 0 14 13"><path d="M7 0.3L8.7 4.8L13.6 5L9.8 8L11.1 12.6L7 10L2.9 12.6L4.2 8L0.4 5L5.3 4.8Z" fill="#55451a"/></svg>
<svg style="left:1640px;top:559px;" width="23" height="22" viewBox="0 0 23 22"><rect x="1" y="1" width="17.5" height="17.5" rx="2.5" fill="none" stroke="#e85c30" stroke-width="1.5"/><path d="M3.5 15V4L5.5 12L7 6L8.5 11.5L10 8L11 10.5L12.5 9.5H16" fill="none" stroke="#e85c30" stroke-width="1.2"/><rect x="11.5" y="13" width="9.5" height="8" fill="#0e0e0e"/><path d="M13 20L14.5 14.8M15.7 20L17.2 14.8M18.4 20L19.9 14.8" stroke="#52699a" stroke-width="1.05"/></svg>
<div class="t" style="left:1666.00px;top:561.47px;font-size:15px;line-height:18px;color:#ececec;transform:scaleX(0.9112);transform-origin:0 50%;">Abbey Road Plates Mono</div>
<svg style="left:1867px;top:561.7px;" width="14" height="13" viewBox="0 0 14 13"><path d="M7 0.3L8.7 4.8L13.6 5L9.8 8L11.1 12.6L7 10L2.9 12.6L4.2 8L0.4 5L5.3 4.8Z" fill="#55451a"/></svg>
<svg style="left:1640px;top:584px;" width="23" height="22" viewBox="0 0 23 22"><rect x="1" y="1" width="17.5" height="17.5" rx="2.5" fill="none" stroke="#e85c30" stroke-width="1.5"/><path d="M3.5 15V4L5.5 12L7 6L8.5 11.5L10 8L11 10.5L12.5 9.5H16" fill="none" stroke="#e85c30" stroke-width="1.2"/><rect x="11.5" y="13" width="9.5" height="8" fill="#0e0e0e"/><path d="M13 20L14.5 14.8M15.7 20L17.2 14.8M18.4 20L19.9 14.8" stroke="#52699a" stroke-width="1.05"/></svg>
<div class="t" style="left:1666.00px;top:586.47px;font-size:15px;line-height:18px;color:#ececec;transform:scaleX(0.9156);transform-origin:0 50%;">Abbey Road Plates Mono/St...</div>
<svg style="left:1867px;top:586.7px;" width="14" height="13" viewBox="0 0 14 13"><path d="M7 0.3L8.7 4.8L13.6 5L9.8 8L11.1 12.6L7 10L2.9 12.6L4.2 8L0.4 5L5.3 4.8Z" fill="#55451a"/></svg>
<svg style="left:1640px;top:609px;" width="23" height="22" viewBox="0 0 23 22"><rect x="1" y="1" width="17.5" height="17.5" rx="2.5" fill="none" stroke="#e85c30" stroke-width="1.5"/><path d="M3.5 15V4L5.5 12L7 6L8.5 11.5L10 8L11 10.5L12.5 9.5H16" fill="none" stroke="#e85c30" stroke-width="1.2"/><rect x="11.5" y="13" width="9.5" height="8" fill="#0e0e0e"/><path d="M13 20L14.5 14.8M15.7 20L17.2 14.8M18.4 20L19.9 14.8" stroke="#52699a" stroke-width="1.05"/></svg>
<div class="t" style="left:1666.00px;top:611.47px;font-size:15px;line-height:18px;color:#ececec;transform:scaleX(0.9107);transform-origin:0 50%;">Abbey Road Plates Stereo</div>
<svg style="left:1867px;top:611.7px;" width="14" height="13" viewBox="0 0 14 13"><path d="M7 0.3L8.7 4.8L13.6 5L9.8 8L11.1 12.6L7 10L2.9 12.6L4.2 8L0.4 5L5.3 4.8Z" fill="#55451a"/></svg>
<svg style="left:1640px;top:634px;" width="23" height="22" viewBox="0 0 23 22"><rect x="1" y="1" width="17.5" height="17.5" rx="2.5" fill="none" stroke="#e85c30" stroke-width="1.5"/><path d="M3.5 15V4L5.5 12L7 6L8.5 11.5L10 8L11 10.5L12.5 9.5H16" fill="none" stroke="#e85c30" stroke-width="1.2"/><rect x="11.5" y="13" width="9.5" height="8" fill="#0e0e0e"/><path d="M13 20L14.5 14.8M15.7 20L17.2 14.8M18.4 20L19.9 14.8" stroke="#52699a" stroke-width="1.05"/></svg>
<div class="t" style="left:1666.00px;top:636.47px;font-size:15px;line-height:18px;color:#ececec;transform:scaleX(0.9171);transform-origin:0 50%;">Abbey Road Vinyl Light Mono</div>
<svg style="left:1867px;top:636.7px;" width="14" height="13" viewBox="0 0 14 13"><path d="M7 0.3L8.7 4.8L13.6 5L9.8 8L11.1 12.6L7 10L2.9 12.6L4.2 8L0.4 5L5.3 4.8Z" fill="#55451a"/></svg>
<svg style="left:1640px;top:659px;" width="23" height="22" viewBox="0 0 23 22"><rect x="1" y="1" width="17.5" height="17.5" rx="2.5" fill="none" stroke="#e85c30" stroke-width="1.5"/><path d="M3.5 15V4L5.5 12L7 6L8.5 11.5L10 8L11 10.5L12.5 9.5H16" fill="none" stroke="#e85c30" stroke-width="1.2"/><rect x="11.5" y="13" width="9.5" height="8" fill="#0e0e0e"/><path d="M13 20L14.5 14.8M15.7 20L17.2 14.8M18.4 20L19.9 14.8" stroke="#52699a" stroke-width="1.05"/></svg>
<div class="t" style="left:1666.00px;top:661.47px;font-size:15px;line-height:18px;color:#ececec;transform:scaleX(0.9195);transform-origin:0 50%;">Abbey Road Vinyl Light Ster...</div>
<svg style="left:1867px;top:661.7px;" width="14" height="13" viewBox="0 0 14 13"><path d="M7 0.3L8.7 4.8L13.6 5L9.8 8L11.1 12.6L7 10L2.9 12.6L4.2 8L0.4 5L5.3 4.8Z" fill="#55451a"/></svg>
<svg style="left:1640px;top:684px;" width="23" height="22" viewBox="0 0 23 22"><rect x="1" y="1" width="17.5" height="17.5" rx="2.5" fill="none" stroke="#e85c30" stroke-width="1.5"/><path d="M3.5 15V4L5.5 12L7 6L8.5 11.5L10 8L11 10.5L12.5 9.5H16" fill="none" stroke="#e85c30" stroke-width="1.2"/><rect x="11.5" y="13" width="9.5" height="8" fill="#0e0e0e"/><path d="M13 20L14.5 14.8M15.7 20L17.2 14.8M18.4 20L19.9 14.8" stroke="#52699a" stroke-width="1.05"/></svg>
<div class="t" style="left:1666.00px;top:686.47px;font-size:15px;line-height:18px;color:#ececec;transform:scaleX(0.9150);transform-origin:0 50%;">Abbey Road Vinyl Mono</div>
<svg style="left:1867px;top:686.7px;" width="14" height="13" viewBox="0 0 14 13"><path d="M7 0.3L8.7 4.8L13.6 5L9.8 8L11.1 12.6L7 10L2.9 12.6L4.2 8L0.4 5L5.3 4.8Z" fill="#55451a"/></svg>
<svg style="left:1640px;top:709px;" width="23" height="22" viewBox="0 0 23 22"><rect x="1" y="1" width="17.5" height="17.5" rx="2.5" fill="none" stroke="#e85c30" stroke-width="1.5"/><path d="M3.5 15V4L5.5 12L7 6L8.5 11.5L10 8L11 10.5L12.5 9.5H16" fill="none" stroke="#e85c30" stroke-width="1.2"/><rect x="11.5" y="13" width="9.5" height="8" fill="#0e0e0e"/><path d="M13 20L14.5 14.8M15.7 20L17.2 14.8M18.4 20L19.9 14.8" stroke="#52699a" stroke-width="1.05"/></svg>
<div class="t" style="left:1666.00px;top:711.47px;font-size:15px;line-height:18px;color:#ececec;transform:scaleX(0.9143);transform-origin:0 50%;">Abbey Road Vinyl Stereo</div>
<svg style="left:1867px;top:711.7px;" width="14" height="13" viewBox="0 0 14 13"><path d="M7 0.3L8.7 4.8L13.6 5L9.8 8L11.1 12.6L7 10L2.9 12.6L4.2 8L0.4 5L5.3 4.8Z" fill="#55451a"/></svg>
<svg style="left:1640px;top:734px;" width="23" height="22" viewBox="0 0 23 22"><rect x="1" y="1" width="17.5" height="17.5" rx="2.5" fill="none" stroke="#e85c30" stroke-width="1.5"/><path d="M3.5 15V4L5.5 12L7 6L8.5 11.5L10 8L11 10.5L12.5 9.5H16" fill="none" stroke="#e85c30" stroke-width="1.2"/></svg>
<div class="t" style="left:1666.00px;top:736.47px;font-size:15px;line-height:18px;color:#ececec;transform:scaleX(0.9402);transform-origin:0 50%;">Amp</div>
<svg style="left:1867px;top:736.7px;" width="14" height="13" viewBox="0 0 14 13"><path d="M7 0.3L8.7 4.8L13.6 5L9.8 8L11.1 12.6L7 10L2.9 12.6L4.2 8L0.4 5L5.3 4.8Z" fill="#55451a"/></svg>
<svg style="left:1640px;top:759px;" width="23" height="22" viewBox="0 0 23 22"><rect x="1" y="1" width="17.5" height="17.5" rx="2.5" fill="none" stroke="#e85c30" stroke-width="1.5"/><path d="M3.5 15V4L5.5 12L7 6L8.5 11.5L10 8L11 10.5L12.5 9.5H16" fill="none" stroke="#e85c30" stroke-width="1.2"/><rect x="10" y="13" width="12" height="7" fill="#0e0e0e"/><circle cx="16" cy="16.5" r="2.8" fill="#f58220"/><path d="M11.5 16.5H21.5" stroke="#f58220" stroke-width="1.3"/></svg>
<div class="t" style="left:1666.00px;top:761.47px;font-size:15px;line-height:18px;color:#ececec;transform:scaleX(0.9450);transform-origin:0 50%;">Antresol</div>
<svg style="left:1867px;top:761.7px;" width="14" height="13" viewBox="0 0 14 13"><path d="M7 0.3L8.7 4.8L13.6 5L9.8 8L11.1 12.6L7 10L2.9 12.6L4.2 8L0.4 5L5.3 4.8Z" fill="#55451a"/></svg>
<svg style="left:1640px;top:784px;" width="23" height="22" viewBox="0 0 23 22"><rect x="1" y="1" width="17.5" height="17.5" rx="2.5" fill="none" stroke="#e85c30" stroke-width="1.5"/><path d="M3.5 15V4L5.5 12L7 6L8.5 11.5L10 8L11 10.5L12.5 9.5H16" fill="none" stroke="#e85c30" stroke-width="1.2"/><rect x="11.5" y="13" width="9.5" height="8" fill="#0e0e0e"/><path d="M13 20L14.5 14.8M15.7 20L17.2 14.8M18.4 20L19.9 14.8" stroke="#52699a" stroke-width="1.05"/></svg>
<div class="t" style="left:1666.00px;top:786.47px;font-size:15px;line-height:18px;color:#ececec;transform:scaleX(0.9153);transform-origin:0 50%;">Aphex Vintage Exciter Mono</div>
<svg style="left:1867px;top:786.7px;" width="14" height="13" viewBox="0 0 14 13"><path d="M7 0.3L8.7 4.8L13.6 5L9.8 8L11.1 12.6L7 10L2.9 12.6L4.2 8L0.4 5L5.3 4.8Z" fill="#55451a"/></svg>
<svg style="left:1640px;top:809px;" width="23" height="22" viewBox="0 0 23 22"><rect x="1" y="1" width="17.5" height="17.5" rx="2.5" fill="none" stroke="#e85c30" stroke-width="1.5"/><path d="M3.5 15V4L5.5 12L7 6L8.5 11.5L10 8L11 10.5L12.5 9.5H16" fill="none" stroke="#e85c30" stroke-width="1.2"/><rect x="11.5" y="13" width="9.5" height="8" fill="#0e0e0e"/><path d="M13 20L14.5 14.8M15.7 20L17.2 14.8M18.4 20L19.9 14.8" stroke="#52699a" stroke-width="1.05"/></svg>
<div class="t" style="left:1666.00px;top:811.47px;font-size:15px;line-height:18px;color:#ececec;transform:scaleX(0.9148);transform-origin:0 50%;">Aphex Vintage Exciter Stereo</div>
<svg style="left:1867px;top:811.7px;" width="14" height="13" viewBox="0 0 14 13"><path d="M7 0.3L8.7 4.8L13.6 5L9.8 8L11.1 12.6L7 10L2.9 12.6L4.2 8L0.4 5L5.3 4.8Z" fill="#55451a"/></svg>
<svg style="left:1640px;top:834px;" width="23" height="22" viewBox="0 0 23 22"><rect x="1" y="1" width="17.5" height="17.5" rx="2.5" fill="none" stroke="#e85c30" stroke-width="1.5"/><path d="M3.5 15V4L5.5 12L7 6L8.5 11.5L10 8L11 10.5L12.5 9.5H16" fill="none" stroke="#e85c30" stroke-width="1.2"/><rect x="11.5" y="13" width="9.5" height="8" fill="#0e0e0e"/><path d="M13 20L14.5 14.8M15.7 20L17.2 14.8M18.4 20L19.9 14.8" stroke="#52699a" stroke-width="1.05"/></svg>
<div class="t" style="left:1666.00px;top:836.47px;font-size:15px;line-height:18px;color:#ececec;transform:scaleX(0.8922);transform-origin:0 50%;">API-2500 Mono</div>
<svg style="left:1867px;top:836.7px;" width="14" height="13" viewBox="0 0 14 13"><path d="M7 0.3L8.7 4.8L13.6 5L9.8 8L11.1 12.6L7 10L2.9 12.6L4.2 8L0.4 5L5.3 4.8Z" fill="#55451a"/></svg>
<svg style="left:1640px;top:859px;" width="23" height="22" viewBox="0 0 23 22"><rect x="1" y="1" width="17.5" height="17.5" rx="2.5" fill="none" stroke="#e85c30" stroke-width="1.5"/><path d="M3.5 15V4L5.5 12L7 6L8.5 11.5L10 8L11 10.5L12.5 9.5H16" fill="none" stroke="#e85c30" stroke-width="1.2"/><rect x="11.5" y="13" width="9.5" height="8" fill="#0e0e0e"/><path d="M13 20L14.5 14.8M15.7 20L17.2 14.8M18.4 20L19.9 14.8" stroke="#52699a" stroke-width="1.05"/></svg>
<div class="t" style="left:1666.00px;top:861.47px;font-size:15px;line-height:18px;color:#ececec;transform:scaleX(0.8926);transform-origin:0 50%;">API-2500 Stereo</div>
<svg style="left:1867px;top:861.7px;" width="14" height="13" viewBox="0 0 14 13"><path d="M7 0.3L8.7 4.8L13.6 5L9.8 8L11.1 12.6L7 10L2.9 12.6L4.2 8L0.4 5L5.3 4.8Z" fill="#55451a"/></svg>
<div style="left:1631px;top:881px;width:265px;height:5px;background:#555;"></div>
<div style="left:1634px;top:886px;width:264px;height:30px;background:#0e0e0e;"></div>
<div class="t" style="left:1643.00px;top:890.87px;font-size:15px;line-height:18px;color:#ececec;transform:scaleX(0.9232);transform-origin:0 50%;">Select a file to see its metadata here</div></div></body></html>
